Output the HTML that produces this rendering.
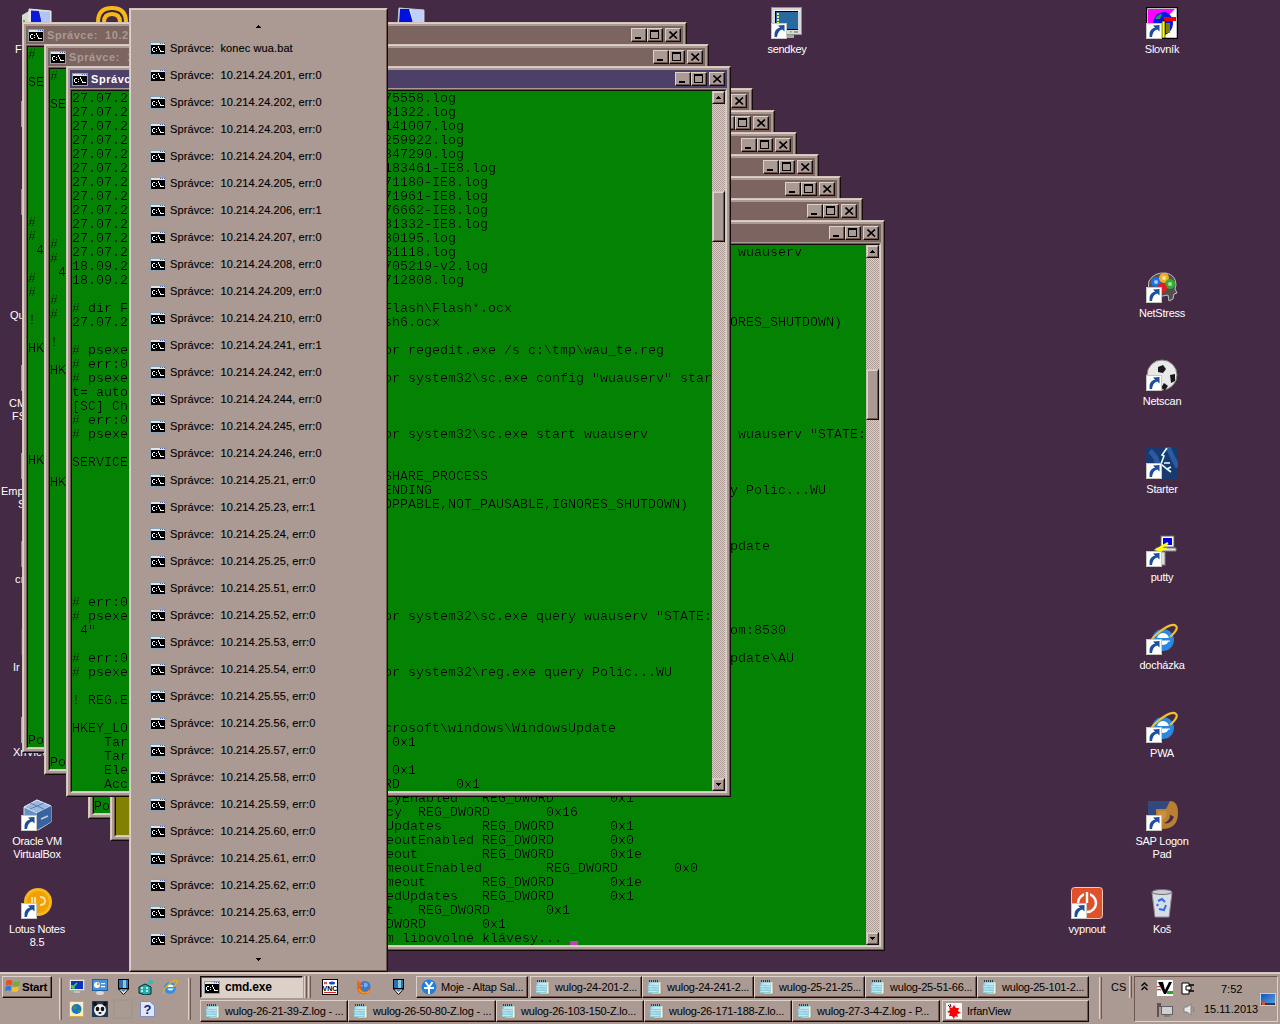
<!DOCTYPE html><html><head><meta charset="utf-8"><style>
*{margin:0;padding:0;box-sizing:border-box}
html,body{width:1280px;height:1024px;overflow:hidden;background:#452a45;font-family:"Liberation Sans",sans-serif;position:relative}
.a{position:absolute}
.win{position:absolute;width:665px;height:731px;background:#aa9a93;
 border-top:1px solid #d0c4bc;border-left:1px solid #d0c4bc;border-right:1px solid #140c0c;border-bottom:1px solid #140c0c}
.win .f2{position:absolute;left:0;top:0;right:0;bottom:0;border-top:1px solid #dcd2ca;border-left:1px solid #dcd2ca;border-right:1px solid #705850;border-bottom:1px solid #705850}
.tb{position:absolute;left:3px;top:3px;width:657px;height:18px;background:#7c6460}
.act .tb{background:#4c4068}
.tt{position:absolute;left:21px;top:3px;font-weight:bold;font-size:11px;letter-spacing:0.55px;line-height:12px;color:#aa9a93;white-space:pre}
.act .tt{color:#fff}
.ico{position:absolute;left:2px;top:3px;width:16px;height:13px}
.ico i{position:absolute;left:1px;top:1px;font:bold 7px/8px "Liberation Mono",monospace;color:#fff;font-style:normal;letter-spacing:-1px}
.btn{position:absolute;top:2px;width:16px;height:14px;background:#aa9a93;border-top:1px solid #dcd2ca;border-left:1px solid #dcd2ca;border-right:1px solid #140c0c;border-bottom:1px solid #140c0c}
.btn:after{content:"";position:absolute;left:0;top:0;right:0;bottom:0;border-right:1px solid #705850;border-bottom:1px solid #705850}
.cl{position:absolute;left:3px;top:22px;width:657px;height:704px;border-top:1px solid #705850;border-left:1px solid #705850;border-right:1px solid #dcd2ca;border-bottom:1px solid #dcd2ca}
.cl2{position:absolute;left:0;top:0;right:0;bottom:0;border-top:1px solid #140c0c;border-left:1px solid #140c0c;border-right:1px solid #d0c4bc;border-bottom:1px solid #d0c4bc;background:#048204;overflow:hidden}
.con{position:absolute;left:0;top:1px;width:640px;height:700px;filter:url(#thin);font:13.333px/14px "Liberation Mono",monospace;color:#000;white-space:pre}
.sb{position:absolute;left:640px;top:0;width:13px;height:700px;background-color:#dcd2ca;background-image:repeating-conic-gradient(#aa9a93 0% 25%, #dcd2ca 0% 50%);background-size:2px 2px}
.sbb{position:absolute;left:0;width:13px;height:13px;background:#aa9a93;border-top:1px solid #d0c4bc;border-left:1px solid #d0c4bc;border-right:1px solid #140c0c;border-bottom:1px solid #140c0c}
.sbb:after{content:"";position:absolute;left:0;top:0;right:0;bottom:0;border-top:1px solid #dcd2ca;border-left:1px solid #dcd2ca;border-right:1px solid #705850;border-bottom:1px solid #705850}
.lab{position:absolute;color:#fff;font-size:11px;line-height:13px;text-align:center;width:74px;letter-spacing:-0.25px}
.mi{position:absolute;left:21px;font-size:11px;letter-spacing:0.1px;line-height:13px;color:#000;white-space:pre;-webkit-text-stroke:0.12px #000}
.mic{position:absolute;left:20px;width:16px;height:13px}
.mic i{position:absolute;left:1px;top:1px;font:bold 7px/8px "Liberation Mono",monospace;color:#fff;font-style:normal;letter-spacing:-1px}
.tbtn{position:absolute;height:22px;background:#aa9a93;border-top:1px solid #dcd2ca;border-left:1px solid #dcd2ca;border-right:1px solid #140c0c;border-bottom:1px solid #140c0c;font-size:11px;line-height:19px;white-space:pre;overflow:hidden;color:#000;letter-spacing:-0.2px}
.tbtn:after{content:"";position:absolute;left:0;top:0;right:0;bottom:0;border-right:1px solid #705850;border-bottom:1px solid #705850}
.pr:after{display:none}
</style></head><body><svg width="0" height="0" style="position:absolute"><filter id="thin" color-interpolation-filters="sRGB"><feComponentTransfer><feFuncA type="linear" slope="1.45" intercept="-0.4"/></feComponentTransfer></filter></svg><svg class="a" style="left:1146px;top:7px" width="32" height="32" viewBox="0 0 32 32"><rect x="0.5" y="0.5" width="31" height="31" fill="#fff" stroke="#000" stroke-width="1.5"/><path d="M2 2 H29 L22 9 L12 12 L2 20Z" fill="#ff00ff"/><path d="M7 14 Q10 5 19 5 Q27 7 27 17 Q26 26 18 28 L12 28 Q7 24 7 14Z" fill="#0018f0"/><path d="M9 12 Q12 7 16 7 L14 12 Z" fill="#20a040"/><rect x="18" y="10" width="12" height="4" fill="#f00000"/><rect x="20" y="16" width="4" height="10" fill="#808000"/><rect x="16" y="14" width="3" height="17" fill="#ffff00" stroke="#000" stroke-width="0.6"/><g><rect x="0.5" y="16.5" width="15" height="15" fill="#fff" stroke="#c8c8c0"/><path d="M3.5 30 Q2.5 22 9 20.5 L7 18.5 L13.5 18 L13.5 24.5 L11.3 22.6 Q7 23.5 6 30 Z" fill="#1d4f9e"/></g></svg><div class="lab" style="left:1125px;top:43px">Slovník</div><svg class="a" style="left:1146px;top:271px" width="32" height="32" viewBox="0 0 32 32"><path d="M6 26 Q1 18 3 10 Q8 1 20 2 Q30 4 30 14 L29 18 L31 22 L28 23 L27 28 L23 30 L22 24 Q14 26 6 26Z" fill="#505050" stroke="#c0c0c0"/><circle cx="10" cy="11" r="5" fill="#2070e0"/><circle cx="18" cy="7" r="5" fill="#f0b020"/><circle cx="24" cy="13" r="5" fill="#30b030"/><circle cx="16" cy="17" r="5" fill="#e02020"/><circle cx="10" cy="11" r="2" fill="#a0c8ff"/><circle cx="18" cy="7" r="2" fill="#ffe0a0"/><circle cx="24" cy="13" r="2" fill="#a0e0a0"/><g><rect x="0.5" y="16.5" width="15" height="15" fill="#fff" stroke="#c8c8c0"/><path d="M3.5 30 Q2.5 22 9 20.5 L7 18.5 L13.5 18 L13.5 24.5 L11.3 22.6 Q7 23.5 6 30 Z" fill="#1d4f9e"/></g></svg><div class="lab" style="left:1125px;top:307px">NetStress</div><svg class="a" style="left:1146px;top:359px" width="32" height="32" viewBox="0 0 32 32"><circle cx="16" cy="16" r="15" fill="#e8e8e8" stroke="#808080"/><path d="M12 8 L17 6 L20 10 L17 14 L12 13Z M24 16 L29 15 L29 22 L25 24Z M5 19 L9 20 L9 26 L5 24Z M18 24 L22 27 L19 31 L15 29Z" fill="#181818"/><g><rect x="0.5" y="16.5" width="15" height="15" fill="#fff" stroke="#c8c8c0"/><path d="M3.5 30 Q2.5 22 9 20.5 L7 18.5 L13.5 18 L13.5 24.5 L11.3 22.6 Q7 23.5 6 30 Z" fill="#1d4f9e"/></g></svg><div class="lab" style="left:1125px;top:395px">Netscan</div><svg class="a" style="left:1146px;top:447px" width="32" height="32" viewBox="0 0 32 32"><rect x="0" y="0" width="32" height="32" fill="#183a70"/><path d="M4 4 Q16 14 10 30 M22 0 Q28 14 32 20" stroke="#2a5aa0" stroke-width="5" fill="none"/><path d="M21 1 L16 8 L18 9 L15 17 L21 22 L25 25 M18 16 L24 16 M21 22 L25 20" stroke="#e0ffff" stroke-width="1.6" fill="none"/><g><rect x="0.5" y="16.5" width="15" height="15" fill="#fff" stroke="#c8c8c0"/><path d="M3.5 30 Q2.5 22 9 20.5 L7 18.5 L13.5 18 L13.5 24.5 L11.3 22.6 Q7 23.5 6 30 Z" fill="#1d4f9e"/></g></svg><div class="lab" style="left:1125px;top:483px">Starter</div><svg class="a" style="left:1146px;top:535px" width="32" height="32" viewBox="0 0 32 32"><rect x="15" y="1" width="13" height="11" fill="#fff" stroke="#606060"/><rect x="17" y="3" width="9" height="7" fill="#0000e0"/><path d="M10 13 H30 V16 H10Z" fill="#e0e0e0" stroke="#808080"/><rect x="6" y="17" width="13" height="13" fill="#e0e0e0" stroke="#808080"/><path d="M22 8 L12 14 L17 14 L8 19" stroke="#ffff00" stroke-width="2.5" fill="none"/><g><rect x="0.5" y="16.5" width="15" height="15" fill="#fff" stroke="#c8c8c0"/><path d="M3.5 30 Q2.5 22 9 20.5 L7 18.5 L13.5 18 L13.5 24.5 L11.3 22.6 Q7 23.5 6 30 Z" fill="#1d4f9e"/></g></svg><div class="lab" style="left:1125px;top:571px">putty</div><svg class="a" style="left:1146px;top:623px" width="32" height="32" viewBox="0 0 32 32"><circle cx="17" cy="17" r="11" fill="#2a88e0"/><circle cx="17" cy="16" r="6" fill="#fff"/><rect x="10" y="15" width="15" height="3" fill="#2a88e0"/><path d="M11 18 H24" stroke="#fff" stroke-width="1"/><path d="M4 26 Q0 20 12 10 Q26 -1 30 3 Q33 6 24 14" stroke="#f0c030" stroke-width="2.2" fill="none"/><g><rect x="0.5" y="16.5" width="15" height="15" fill="#fff" stroke="#c8c8c0"/><path d="M3.5 30 Q2.5 22 9 20.5 L7 18.5 L13.5 18 L13.5 24.5 L11.3 22.6 Q7 23.5 6 30 Z" fill="#1d4f9e"/></g></svg><div class="lab" style="left:1125px;top:659px">docházka</div><svg class="a" style="left:1146px;top:711px" width="32" height="32" viewBox="0 0 32 32"><circle cx="17" cy="17" r="11" fill="#2a88e0"/><circle cx="17" cy="16" r="6" fill="#fff"/><rect x="10" y="15" width="15" height="3" fill="#2a88e0"/><path d="M11 18 H24" stroke="#fff" stroke-width="1"/><path d="M4 26 Q0 20 12 10 Q26 -1 30 3 Q33 6 24 14" stroke="#f0c030" stroke-width="2.2" fill="none"/><g><rect x="0.5" y="16.5" width="15" height="15" fill="#fff" stroke="#c8c8c0"/><path d="M3.5 30 Q2.5 22 9 20.5 L7 18.5 L13.5 18 L13.5 24.5 L11.3 22.6 Q7 23.5 6 30 Z" fill="#1d4f9e"/></g></svg><div class="lab" style="left:1125px;top:747px">PWA</div><svg class="a" style="left:1146px;top:799px" width="32" height="32" viewBox="0 0 32 32"><path d="M2 2 H24 Q32 2 32 14 Q32 30 16 30 H10 V10 H20 Q24 10 24 16 Q24 22 18 24 Q24 26 28 18" fill="#b88030"/><path d="M2 2 H24 L20 10 H10 L10 30 L2 28Z" fill="#304a80"/><path d="M12 12 H20 Q22 18 16 22 H12Z" fill="#c89040"/><g><rect x="0.5" y="16.5" width="15" height="15" fill="#fff" stroke="#c8c8c0"/><path d="M3.5 30 Q2.5 22 9 20.5 L7 18.5 L13.5 18 L13.5 24.5 L11.3 22.6 Q7 23.5 6 30 Z" fill="#1d4f9e"/></g></svg><div class="lab" style="left:1125px;top:835px">SAP Logon</div><div class="lab" style="left:1125px;top:848px">Pad</div><svg class="a" style="left:1146px;top:887px" width="32" height="32" viewBox="0 0 32 32"><path d="M6 5 H26 L23 30 H9Z" fill="#d8dce8" stroke="#909090"/><ellipse cx="16" cy="5" rx="10" ry="2.5" fill="#c8ccd8" stroke="#707070"/><path d="M12 14 L16 12 L19 15 M20 18 L18 23 L13 22 M11 19 L12 17" stroke="#3070e0" stroke-width="2" fill="none"/></svg><div class="lab" style="left:1125px;top:923px">Koš</div><svg class="a" style="left:1071px;top:887px" width="32" height="32" viewBox="0 0 32 32"><rect x="0.5" y="0.5" width="31" height="31" rx="3" fill="#e0502a" stroke="#f0c8b8"/><circle cx="16" cy="16" r="9" stroke="#fff" stroke-width="2.5" fill="none"/><rect x="13" y="4" width="6" height="10" fill="#e0502a"/><rect x="14.8" y="5" width="2.4" height="11" fill="#fff"/><g><rect x="0.5" y="16.5" width="15" height="15" fill="#fff" stroke="#c8c8c0"/><path d="M3.5 30 Q2.5 22 9 20.5 L7 18.5 L13.5 18 L13.5 24.5 L11.3 22.6 Q7 23.5 6 30 Z" fill="#1d4f9e"/></g></svg><div class="lab" style="left:1050px;top:923px">vypnout</div><svg class="a" style="left:771px;top:7px" width="32" height="32" viewBox="0 0 32 32"><rect x="0.5" y="0.5" width="30" height="27" fill="#d8d8d8" stroke="#909090"/><rect x="3" y="3" width="26" height="2" fill="#f0f0f0"/><rect x="4" y="4" width="23" height="19" fill="#000"/><rect x="5" y="5" width="22" height="17" fill="#286aa0"/><rect x="6" y="6" width="2" height="2" fill="#f0f060"/><rect x="6" y="9" width="2" height="2" fill="#f0f060"/><rect x="6" y="12" width="2" height="2" fill="#f0f060"/><rect x="6" y="15" width="2" height="2" fill="#f0f060"/><rect x="19" y="24" width="1.5" height="1.5" fill="#20e020"/><rect x="23" y="24.5" width="4" height="1" fill="#606060"/><rect x="16" y="28" width="7" height="3" fill="#a8a8a8"/><g><rect x="0.5" y="16.5" width="15" height="15" fill="#fff" stroke="#c8c8c0"/><path d="M3.5 30 Q2.5 22 9 20.5 L7 18.5 L13.5 18 L13.5 24.5 L11.3 22.6 Q7 23.5 6 30 Z" fill="#1d4f9e"/></g></svg><div class="lab" style="left:750px;top:43px">sendkey</div><svg class="a" style="left:21px;top:799px" width="32" height="32" viewBox="0 0 32 32"><path d="M16 1 L30 7 V23 L17 31 L3 24 V8Z" fill="#6a90c0" stroke="#d0e0f0"/><path d="M3 8 L16 14 L30 7 L16 1Z" fill="#9ab8e0" stroke="#e8f0f8" stroke-width="0.8"/><path d="M16 14 V31 L30 23 V7Z" fill="#3a64a0"/><path d="M9 4 L23 10 M23 4 L9 10" stroke="#5070a0" stroke-width="0.8"/><path d="M20 20 L27 17" stroke="#c0d0e0" stroke-width="1.5"/><g><rect x="0.5" y="16.5" width="15" height="15" fill="#fff" stroke="#c8c8c0"/><path d="M3.5 30 Q2.5 22 9 20.5 L7 18.5 L13.5 18 L13.5 24.5 L11.3 22.6 Q7 23.5 6 30 Z" fill="#1d4f9e"/></g></svg><div class="lab" style="left:0px;top:835px">Oracle VM</div><div class="lab" style="left:0px;top:848px">VirtualBox</div><svg class="a" style="left:21px;top:887px" width="32" height="32" viewBox="0 0 32 32"><circle cx="17" cy="15" r="14" fill="#f8b820"/><circle cx="17" cy="15" r="11" fill="#f0a000"/><path d="M11 10 V20 M14 10 V20 M19 10 Q24 10 24 14 Q24 18 19 18" stroke="#f8e0a0" stroke-width="2" fill="none"/><g><rect x="0.5" y="16.5" width="15" height="15" fill="#fff" stroke="#c8c8c0"/><path d="M3.5 30 Q2.5 22 9 20.5 L7 18.5 L13.5 18 L13.5 24.5 L11.3 22.6 Q7 23.5 6 30 Z" fill="#1d4f9e"/></g></svg><div class="lab" style="left:0px;top:923px">Lotus Notes</div><div class="lab" style="left:0px;top:936px">8.5</div><svg class="a" style="left:21px;top:8px" width="32" height="16" viewBox="0 0 32 16"><path d="M1 7 L8 3 V16 H1Z" fill="#d8d8d0"/><path d="M8 1 L30 3 V16 H8Z" fill="#e0e4f0" stroke="#e8e8e8"/><path d="M10 2.5 L18 3 L21 16 H10Z" fill="#0a1ad8"/><path d="M19 3.5 H29 V16 H21Z" fill="#b0c4f8"/><rect x="2" y="12" width="2" height="2" fill="#40c040"/></svg><svg class="a" style="left:96px;top:6px" width="32" height="16" viewBox="0 0 32 16"><path d="M2 16 Q2 2 16 2 Q30 2 30 16" stroke="#f8b818" stroke-width="4" fill="none"/><path d="M8 16 Q8 8 16 8 Q24 8 24 16" stroke="#f8b818" stroke-width="4" fill="none"/><path d="M5 16 Q5 5 16 5 Q27 5 27 16" stroke="#282848" stroke-width="1" fill="none"/></svg><svg class="a" style="left:397px;top:7px" width="32" height="16" viewBox="0 0 32 16"><path d="M2 1 L27 3 V16 H1Z" fill="#e0e8f8" stroke="#c0c8d0"/><path d="M3 2 L12 2 L16 16 H2Z" fill="#0010e0"/><path d="M14 3 H26 V16 H16Z" fill="#c0d0f8"/></svg><div class="a" style="left:0;top:0;width:22px;height:760px;overflow:hidden"><div class="a" style="left:15px;top:43px;color:#fff;font-size:11px;line-height:13px;white-space:pre">F</div><div class="a" style="left:10px;top:309px;color:#fff;font-size:11px;line-height:13px;white-space:pre">Qu</div><div class="a" style="left:9px;top:397px;color:#fff;font-size:11px;line-height:13px;white-space:pre">CM</div><div class="a" style="left:12px;top:410px;color:#fff;font-size:11px;line-height:13px;white-space:pre">FS</div><div class="a" style="left:1px;top:485px;color:#fff;font-size:11px;line-height:13px;white-space:pre">Emp</div><div class="a" style="left:18px;top:498px;color:#fff;font-size:11px;line-height:13px;white-space:pre">S</div><div class="a" style="left:15px;top:573px;color:#fff;font-size:11px;line-height:13px;white-space:pre">cı</div><div class="a" style="left:13px;top:661px;color:#fff;font-size:11px;line-height:13px;white-space:pre">Ir</div><div class="a" style="left:21px;top:101px;width:1px;height:26px;background:#8aa0c8"></div><div class="a" style="left:21px;top:189px;width:1px;height:26px;background:#7aa070"></div><div class="a" style="left:21px;top:365px;width:1px;height:26px;background:#9a9a98"></div><div class="a" style="left:21px;top:453px;width:1px;height:26px;background:#9a9a98"></div><div class="a" style="left:21px;top:541px;width:1px;height:26px;background:#8a8a90"></div><div class="a" style="left:21px;top:629px;width:1px;height:26px;background:#505058"></div><div class="a" style="left:21px;top:717px;width:1px;height:26px;background:#a8a8b0"></div></div><div class="a" style="left:13px;top:746px;color:#fff;font-size:11px;line-height:13px;white-space:pre">XnView</div><div class="win" style="left:22px;top:22px"><div class="f2"></div><div class="tb"><div class="ico"><svg width="16" height="13" shape-rendering="crispEdges" style="display:block"><rect x="0" y="0" width="16" height="13" fill="#88a0b0"/><rect x="1" y="1" width="14" height="2" fill="#dde4ea"/><rect x="10" y="1" width="1" height="1" fill="#4a68a8"/><rect x="12" y="1" width="1" height="1" fill="#4a68a8"/><rect x="14" y="1" width="1" height="1" fill="#4a68a8"/><rect x="1" y="3" width="14" height="9" fill="#000"/><g fill="#fff"><rect x="3" y="5" width="2" height="1"/><rect x="2" y="6" width="1" height="3"/><rect x="3" y="9" width="2" height="1"/><rect x="6" y="6" width="1" height="1"/><rect x="6" y="8" width="1" height="1"/><rect x="8" y="4" width="1" height="2"/><rect x="9" y="6" width="1" height="2"/><rect x="10" y="8" width="1" height="2"/><rect x="11" y="9" width="3" height="1"/></g></svg></div><div class="tt">Správce:  10.214.24.201, err:0</div><div class="btn" style="left:605px"><div class="a" style="left:3px;top:8px;width:6px;height:2px;background:#000"></div></div><div class="btn" style="left:621px"><div class="a" style="left:2px;top:1px;width:9px;height:9px;border:1px solid #000;border-top:2px solid #000"></div></div><div class="btn" style="left:639px"><svg class="a" style="left:3px;top:2px" width="9" height="8" viewBox="0 0 9 8"><path d="M0.5 0.5 L8 7.5 M8 0.5 L0.5 7.5" stroke="#000" stroke-width="1.6"/></svg></div></div><div class="cl"><div class="cl2" style="background:#048204"><div class="con"><div class="a" style="left:0px;top:0px">#</div><div class="a" style="left:0px;top:28px">SE</div><div class="a" style="left:0px;top:168px">#</div><div class="a" style="left:0px;top:182px">#</div><div class="a" style="left:8px;top:196px">4</div><div class="a" style="left:0px;top:224px">#</div><div class="a" style="left:0px;top:238px">#</div><div class="a" style="left:0px;top:266px">!</div><div class="a" style="left:0px;top:294px">HK</div><div class="a" style="left:0px;top:406px">HK</div><div class="a" style="left:0px;top:686px">Po</div></div><div class="sb"><div class="sbb" style="top:0"><svg class="a" style="left:3px;top:4px" width="5" height="3" shape-rendering="crispEdges"><rect x="2" y="0" width="1" height="1"/><rect x="1" y="1" width="3" height="1"/><rect x="0" y="2" width="5" height="1"/></svg></div><div class="sbb" style="top:687px"><svg class="a" style="left:3px;top:4px" width="5" height="3" shape-rendering="crispEdges"><rect x="0" y="0" width="5" height="1"/><rect x="1" y="1" width="3" height="1"/><rect x="2" y="2" width="1" height="1"/></svg></div></div></div></div></div><div class="win" style="left:44px;top:44px"><div class="f2"></div><div class="tb"><div class="ico"><svg width="16" height="13" shape-rendering="crispEdges" style="display:block"><rect x="0" y="0" width="16" height="13" fill="#88a0b0"/><rect x="1" y="1" width="14" height="2" fill="#dde4ea"/><rect x="10" y="1" width="1" height="1" fill="#4a68a8"/><rect x="12" y="1" width="1" height="1" fill="#4a68a8"/><rect x="14" y="1" width="1" height="1" fill="#4a68a8"/><rect x="1" y="3" width="14" height="9" fill="#000"/><g fill="#fff"><rect x="3" y="5" width="2" height="1"/><rect x="2" y="6" width="1" height="3"/><rect x="3" y="9" width="2" height="1"/><rect x="6" y="6" width="1" height="1"/><rect x="6" y="8" width="1" height="1"/><rect x="8" y="4" width="1" height="2"/><rect x="9" y="6" width="1" height="2"/><rect x="10" y="8" width="1" height="2"/><rect x="11" y="9" width="3" height="1"/></g></svg></div><div class="tt">Správce:  10.214.24.202, err:0</div><div class="btn" style="left:605px"><div class="a" style="left:3px;top:8px;width:6px;height:2px;background:#000"></div></div><div class="btn" style="left:621px"><div class="a" style="left:2px;top:1px;width:9px;height:9px;border:1px solid #000;border-top:2px solid #000"></div></div><div class="btn" style="left:639px"><svg class="a" style="left:3px;top:2px" width="9" height="8" viewBox="0 0 9 8"><path d="M0.5 0.5 L8 7.5 M8 0.5 L0.5 7.5" stroke="#000" stroke-width="1.6"/></svg></div></div><div class="cl"><div class="cl2" style="background:#048204"><div class="con"><div class="a" style="left:0px;top:0px">#</div><div class="a" style="left:0px;top:28px">SE</div><div class="a" style="left:0px;top:168px">#</div><div class="a" style="left:0px;top:182px">#</div><div class="a" style="left:8px;top:196px">4</div><div class="a" style="left:0px;top:224px">#</div><div class="a" style="left:0px;top:238px">#</div><div class="a" style="left:0px;top:266px">!</div><div class="a" style="left:0px;top:294px">HK</div><div class="a" style="left:0px;top:406px">HK</div><div class="a" style="left:0px;top:686px">Po</div></div><div class="sb"><div class="sbb" style="top:0"><svg class="a" style="left:3px;top:4px" width="5" height="3" shape-rendering="crispEdges"><rect x="2" y="0" width="1" height="1"/><rect x="1" y="1" width="3" height="1"/><rect x="0" y="2" width="5" height="1"/></svg></div><div class="sbb" style="top:687px"><svg class="a" style="left:3px;top:4px" width="5" height="3" shape-rendering="crispEdges"><rect x="0" y="0" width="5" height="1"/><rect x="1" y="1" width="3" height="1"/><rect x="2" y="2" width="1" height="1"/></svg></div></div></div></div></div><div class="win" style="left:88px;top:88px"><div class="f2"></div><div class="tb"><div class="ico"><svg width="16" height="13" shape-rendering="crispEdges" style="display:block"><rect x="0" y="0" width="16" height="13" fill="#88a0b0"/><rect x="1" y="1" width="14" height="2" fill="#dde4ea"/><rect x="10" y="1" width="1" height="1" fill="#4a68a8"/><rect x="12" y="1" width="1" height="1" fill="#4a68a8"/><rect x="14" y="1" width="1" height="1" fill="#4a68a8"/><rect x="1" y="3" width="14" height="9" fill="#000"/><g fill="#fff"><rect x="3" y="5" width="2" height="1"/><rect x="2" y="6" width="1" height="3"/><rect x="3" y="9" width="2" height="1"/><rect x="6" y="6" width="1" height="1"/><rect x="6" y="8" width="1" height="1"/><rect x="8" y="4" width="1" height="2"/><rect x="9" y="6" width="1" height="2"/><rect x="10" y="8" width="1" height="2"/><rect x="11" y="9" width="3" height="1"/></g></svg></div><div class="tt">Správce:  x</div><div class="btn" style="left:605px"><div class="a" style="left:3px;top:8px;width:6px;height:2px;background:#000"></div></div><div class="btn" style="left:621px"><div class="a" style="left:2px;top:1px;width:9px;height:9px;border:1px solid #000;border-top:2px solid #000"></div></div><div class="btn" style="left:639px"><svg class="a" style="left:3px;top:2px" width="9" height="8" viewBox="0 0 9 8"><path d="M0.5 0.5 L8 7.5 M8 0.5 L0.5 7.5" stroke="#000" stroke-width="1.6"/></svg></div></div><div class="cl"><div class="cl2" style="background:#048204"><div class="con"><div class="a" style="left:0px;top:686px">Po</div></div><div class="sb"><div class="sbb" style="top:0"><svg class="a" style="left:3px;top:4px" width="5" height="3" shape-rendering="crispEdges"><rect x="2" y="0" width="1" height="1"/><rect x="1" y="1" width="3" height="1"/><rect x="0" y="2" width="5" height="1"/></svg></div><div class="sbb" style="top:687px"><svg class="a" style="left:3px;top:4px" width="5" height="3" shape-rendering="crispEdges"><rect x="0" y="0" width="5" height="1"/><rect x="1" y="1" width="3" height="1"/><rect x="2" y="2" width="1" height="1"/></svg></div></div></div></div></div><div class="win" style="left:110px;top:110px"><div class="f2"></div><div class="tb"><div class="ico"><svg width="16" height="13" shape-rendering="crispEdges" style="display:block"><rect x="0" y="0" width="16" height="13" fill="#88a0b0"/><rect x="1" y="1" width="14" height="2" fill="#dde4ea"/><rect x="10" y="1" width="1" height="1" fill="#4a68a8"/><rect x="12" y="1" width="1" height="1" fill="#4a68a8"/><rect x="14" y="1" width="1" height="1" fill="#4a68a8"/><rect x="1" y="3" width="14" height="9" fill="#000"/><g fill="#fff"><rect x="3" y="5" width="2" height="1"/><rect x="2" y="6" width="1" height="3"/><rect x="3" y="9" width="2" height="1"/><rect x="6" y="6" width="1" height="1"/><rect x="6" y="8" width="1" height="1"/><rect x="8" y="4" width="1" height="2"/><rect x="9" y="6" width="1" height="2"/><rect x="10" y="8" width="1" height="2"/><rect x="11" y="9" width="3" height="1"/></g></svg></div><div class="tt">Správce:  x</div><div class="btn" style="left:605px"><div class="a" style="left:3px;top:8px;width:6px;height:2px;background:#000"></div></div><div class="btn" style="left:621px"><div class="a" style="left:2px;top:1px;width:9px;height:9px;border:1px solid #000;border-top:2px solid #000"></div></div><div class="btn" style="left:639px"><svg class="a" style="left:3px;top:2px" width="9" height="8" viewBox="0 0 9 8"><path d="M0.5 0.5 L8 7.5 M8 0.5 L0.5 7.5" stroke="#000" stroke-width="1.6"/></svg></div></div><div class="cl"><div class="cl2" style="background:#848004"><div class="con"></div><div class="sb"><div class="sbb" style="top:0"><svg class="a" style="left:3px;top:4px" width="5" height="3" shape-rendering="crispEdges"><rect x="2" y="0" width="1" height="1"/><rect x="1" y="1" width="3" height="1"/><rect x="0" y="2" width="5" height="1"/></svg></div><div class="sbb" style="top:687px"><svg class="a" style="left:3px;top:4px" width="5" height="3" shape-rendering="crispEdges"><rect x="0" y="0" width="5" height="1"/><rect x="1" y="1" width="3" height="1"/><rect x="2" y="2" width="1" height="1"/></svg></div></div></div></div></div><div class="win" style="left:132px;top:132px"><div class="f2"></div><div class="tb"><div class="ico"><svg width="16" height="13" shape-rendering="crispEdges" style="display:block"><rect x="0" y="0" width="16" height="13" fill="#88a0b0"/><rect x="1" y="1" width="14" height="2" fill="#dde4ea"/><rect x="10" y="1" width="1" height="1" fill="#4a68a8"/><rect x="12" y="1" width="1" height="1" fill="#4a68a8"/><rect x="14" y="1" width="1" height="1" fill="#4a68a8"/><rect x="1" y="3" width="14" height="9" fill="#000"/><g fill="#fff"><rect x="3" y="5" width="2" height="1"/><rect x="2" y="6" width="1" height="3"/><rect x="3" y="9" width="2" height="1"/><rect x="6" y="6" width="1" height="1"/><rect x="6" y="8" width="1" height="1"/><rect x="8" y="4" width="1" height="2"/><rect x="9" y="6" width="1" height="2"/><rect x="10" y="8" width="1" height="2"/><rect x="11" y="9" width="3" height="1"/></g></svg></div><div class="tt">Správce:  x</div><div class="btn" style="left:605px"><div class="a" style="left:3px;top:8px;width:6px;height:2px;background:#000"></div></div><div class="btn" style="left:621px"><div class="a" style="left:2px;top:1px;width:9px;height:9px;border:1px solid #000;border-top:2px solid #000"></div></div><div class="btn" style="left:639px"><svg class="a" style="left:3px;top:2px" width="9" height="8" viewBox="0 0 9 8"><path d="M0.5 0.5 L8 7.5 M8 0.5 L0.5 7.5" stroke="#000" stroke-width="1.6"/></svg></div></div><div class="cl"><div class="cl2" style="background:#048204"><div class="con"></div><div class="sb"><div class="sbb" style="top:0"><svg class="a" style="left:3px;top:4px" width="5" height="3" shape-rendering="crispEdges"><rect x="2" y="0" width="1" height="1"/><rect x="1" y="1" width="3" height="1"/><rect x="0" y="2" width="5" height="1"/></svg></div><div class="sbb" style="top:687px"><svg class="a" style="left:3px;top:4px" width="5" height="3" shape-rendering="crispEdges"><rect x="0" y="0" width="5" height="1"/><rect x="1" y="1" width="3" height="1"/><rect x="2" y="2" width="1" height="1"/></svg></div></div></div></div></div><div class="win" style="left:154px;top:154px"><div class="f2"></div><div class="tb"><div class="ico"><svg width="16" height="13" shape-rendering="crispEdges" style="display:block"><rect x="0" y="0" width="16" height="13" fill="#88a0b0"/><rect x="1" y="1" width="14" height="2" fill="#dde4ea"/><rect x="10" y="1" width="1" height="1" fill="#4a68a8"/><rect x="12" y="1" width="1" height="1" fill="#4a68a8"/><rect x="14" y="1" width="1" height="1" fill="#4a68a8"/><rect x="1" y="3" width="14" height="9" fill="#000"/><g fill="#fff"><rect x="3" y="5" width="2" height="1"/><rect x="2" y="6" width="1" height="3"/><rect x="3" y="9" width="2" height="1"/><rect x="6" y="6" width="1" height="1"/><rect x="6" y="8" width="1" height="1"/><rect x="8" y="4" width="1" height="2"/><rect x="9" y="6" width="1" height="2"/><rect x="10" y="8" width="1" height="2"/><rect x="11" y="9" width="3" height="1"/></g></svg></div><div class="tt">Správce:  x</div><div class="btn" style="left:605px"><div class="a" style="left:3px;top:8px;width:6px;height:2px;background:#000"></div></div><div class="btn" style="left:621px"><div class="a" style="left:2px;top:1px;width:9px;height:9px;border:1px solid #000;border-top:2px solid #000"></div></div><div class="btn" style="left:639px"><svg class="a" style="left:3px;top:2px" width="9" height="8" viewBox="0 0 9 8"><path d="M0.5 0.5 L8 7.5 M8 0.5 L0.5 7.5" stroke="#000" stroke-width="1.6"/></svg></div></div><div class="cl"><div class="cl2" style="background:#048204"><div class="con"></div><div class="sb"><div class="sbb" style="top:0"><svg class="a" style="left:3px;top:4px" width="5" height="3" shape-rendering="crispEdges"><rect x="2" y="0" width="1" height="1"/><rect x="1" y="1" width="3" height="1"/><rect x="0" y="2" width="5" height="1"/></svg></div><div class="sbb" style="top:687px"><svg class="a" style="left:3px;top:4px" width="5" height="3" shape-rendering="crispEdges"><rect x="0" y="0" width="5" height="1"/><rect x="1" y="1" width="3" height="1"/><rect x="2" y="2" width="1" height="1"/></svg></div></div></div></div></div><div class="win" style="left:176px;top:176px"><div class="f2"></div><div class="tb"><div class="ico"><svg width="16" height="13" shape-rendering="crispEdges" style="display:block"><rect x="0" y="0" width="16" height="13" fill="#88a0b0"/><rect x="1" y="1" width="14" height="2" fill="#dde4ea"/><rect x="10" y="1" width="1" height="1" fill="#4a68a8"/><rect x="12" y="1" width="1" height="1" fill="#4a68a8"/><rect x="14" y="1" width="1" height="1" fill="#4a68a8"/><rect x="1" y="3" width="14" height="9" fill="#000"/><g fill="#fff"><rect x="3" y="5" width="2" height="1"/><rect x="2" y="6" width="1" height="3"/><rect x="3" y="9" width="2" height="1"/><rect x="6" y="6" width="1" height="1"/><rect x="6" y="8" width="1" height="1"/><rect x="8" y="4" width="1" height="2"/><rect x="9" y="6" width="1" height="2"/><rect x="10" y="8" width="1" height="2"/><rect x="11" y="9" width="3" height="1"/></g></svg></div><div class="tt">Správce:  x</div><div class="btn" style="left:605px"><div class="a" style="left:3px;top:8px;width:6px;height:2px;background:#000"></div></div><div class="btn" style="left:621px"><div class="a" style="left:2px;top:1px;width:9px;height:9px;border:1px solid #000;border-top:2px solid #000"></div></div><div class="btn" style="left:639px"><svg class="a" style="left:3px;top:2px" width="9" height="8" viewBox="0 0 9 8"><path d="M0.5 0.5 L8 7.5 M8 0.5 L0.5 7.5" stroke="#000" stroke-width="1.6"/></svg></div></div><div class="cl"><div class="cl2" style="background:#048204"><div class="con"></div><div class="sb"><div class="sbb" style="top:0"><svg class="a" style="left:3px;top:4px" width="5" height="3" shape-rendering="crispEdges"><rect x="2" y="0" width="1" height="1"/><rect x="1" y="1" width="3" height="1"/><rect x="0" y="2" width="5" height="1"/></svg></div><div class="sbb" style="top:687px"><svg class="a" style="left:3px;top:4px" width="5" height="3" shape-rendering="crispEdges"><rect x="0" y="0" width="5" height="1"/><rect x="1" y="1" width="3" height="1"/><rect x="2" y="2" width="1" height="1"/></svg></div></div></div></div></div><div class="win" style="left:198px;top:198px"><div class="f2"></div><div class="tb"><div class="ico"><svg width="16" height="13" shape-rendering="crispEdges" style="display:block"><rect x="0" y="0" width="16" height="13" fill="#88a0b0"/><rect x="1" y="1" width="14" height="2" fill="#dde4ea"/><rect x="10" y="1" width="1" height="1" fill="#4a68a8"/><rect x="12" y="1" width="1" height="1" fill="#4a68a8"/><rect x="14" y="1" width="1" height="1" fill="#4a68a8"/><rect x="1" y="3" width="14" height="9" fill="#000"/><g fill="#fff"><rect x="3" y="5" width="2" height="1"/><rect x="2" y="6" width="1" height="3"/><rect x="3" y="9" width="2" height="1"/><rect x="6" y="6" width="1" height="1"/><rect x="6" y="8" width="1" height="1"/><rect x="8" y="4" width="1" height="2"/><rect x="9" y="6" width="1" height="2"/><rect x="10" y="8" width="1" height="2"/><rect x="11" y="9" width="3" height="1"/></g></svg></div><div class="tt">Správce:  x</div><div class="btn" style="left:605px"><div class="a" style="left:3px;top:8px;width:6px;height:2px;background:#000"></div></div><div class="btn" style="left:621px"><div class="a" style="left:2px;top:1px;width:9px;height:9px;border:1px solid #000;border-top:2px solid #000"></div></div><div class="btn" style="left:639px"><svg class="a" style="left:3px;top:2px" width="9" height="8" viewBox="0 0 9 8"><path d="M0.5 0.5 L8 7.5 M8 0.5 L0.5 7.5" stroke="#000" stroke-width="1.6"/></svg></div></div><div class="cl"><div class="cl2" style="background:#048204"><div class="con"></div><div class="sb"><div class="sbb" style="top:0"><svg class="a" style="left:3px;top:4px" width="5" height="3" shape-rendering="crispEdges"><rect x="2" y="0" width="1" height="1"/><rect x="1" y="1" width="3" height="1"/><rect x="0" y="2" width="5" height="1"/></svg></div><div class="sbb" style="top:687px"><svg class="a" style="left:3px;top:4px" width="5" height="3" shape-rendering="crispEdges"><rect x="0" y="0" width="5" height="1"/><rect x="1" y="1" width="3" height="1"/><rect x="2" y="2" width="1" height="1"/></svg></div></div></div></div></div><div class="win" style="left:220px;top:220px"><div class="f2"></div><div class="tb"><div class="ico"><svg width="16" height="13" shape-rendering="crispEdges" style="display:block"><rect x="0" y="0" width="16" height="13" fill="#88a0b0"/><rect x="1" y="1" width="14" height="2" fill="#dde4ea"/><rect x="10" y="1" width="1" height="1" fill="#4a68a8"/><rect x="12" y="1" width="1" height="1" fill="#4a68a8"/><rect x="14" y="1" width="1" height="1" fill="#4a68a8"/><rect x="1" y="3" width="14" height="9" fill="#000"/><g fill="#fff"><rect x="3" y="5" width="2" height="1"/><rect x="2" y="6" width="1" height="3"/><rect x="3" y="9" width="2" height="1"/><rect x="6" y="6" width="1" height="1"/><rect x="6" y="8" width="1" height="1"/><rect x="8" y="4" width="1" height="2"/><rect x="9" y="6" width="1" height="2"/><rect x="10" y="8" width="1" height="2"/><rect x="11" y="9" width="3" height="1"/></g></svg></div><div class="tt">Správce:  x</div><div class="btn" style="left:605px"><div class="a" style="left:3px;top:8px;width:6px;height:2px;background:#000"></div></div><div class="btn" style="left:621px"><div class="a" style="left:2px;top:1px;width:9px;height:9px;border:1px solid #000;border-top:2px solid #000"></div></div><div class="btn" style="left:639px"><svg class="a" style="left:3px;top:2px" width="9" height="8" viewBox="0 0 9 8"><path d="M0.5 0.5 L8 7.5 M8 0.5 L0.5 7.5" stroke="#000" stroke-width="1.6"/></svg></div></div><div class="cl"><div class="cl2" style="background:#048204"><div class="con"><div class="a" style="left:512px;top:0px">wuauserv</div><div class="a" style="left:504px;top:70px">ORES_SHUTDOWN)</div><div class="a" style="left:512px;top:182px">wuauserv &quot;STATE:</div><div class="a" style="left:504px;top:238px">y Polic...WU</div><div class="a" style="left:504px;top:294px">pdate</div><div class="a" style="left:504px;top:378px">om:8530</div><div class="a" style="left:504px;top:406px">pdate\AU</div><div class="a" style="left:160px;top:546px">cyEnabled   REG_DWORD       0x1</div><div class="a" style="left:160px;top:560px">cy  REG_DWORD       0x16</div><div class="a" style="left:160px;top:574px">Updates     REG_DWORD       0x1</div><div class="a" style="left:160px;top:588px">eoutEnabled REG_DWORD       0x0</div><div class="a" style="left:160px;top:602px">eout        REG_DWORD       0x1e</div><div class="a" style="left:160px;top:616px">meoutEnabled        REG_DWORD       0x0</div><div class="a" style="left:160px;top:630px">meout       REG_DWORD       0x1e</div><div class="a" style="left:160px;top:644px">edUpdates   REG_DWORD       0x1</div><div class="a" style="left:160px;top:658px">t   REG_DWORD       0x1</div><div class="a" style="left:160px;top:672px">DWORD       0x1</div><div class="a" style="left:160px;top:686px">m libovolné klávesy...</div></div><div class="a" style="left:344px;top:696px;width:8px;height:4px;background:#c040c0"></div><div class="sb"><div class="sbb" style="top:0"><svg class="a" style="left:3px;top:4px" width="5" height="3" shape-rendering="crispEdges"><rect x="2" y="0" width="1" height="1"/><rect x="1" y="1" width="3" height="1"/><rect x="0" y="2" width="5" height="1"/></svg></div><div class="sbb" style="top:124px;height:51px"></div><div class="sbb" style="top:687px"><svg class="a" style="left:3px;top:4px" width="5" height="3" shape-rendering="crispEdges"><rect x="0" y="0" width="5" height="1"/><rect x="1" y="1" width="3" height="1"/><rect x="2" y="2" width="1" height="1"/></svg></div></div></div></div></div><div class="win act" style="left:66px;top:66px"><div class="f2"></div><div class="tb"><div class="ico"><svg width="16" height="13" shape-rendering="crispEdges" style="display:block"><rect x="0" y="0" width="16" height="13" fill="#88a0b0"/><rect x="1" y="1" width="14" height="2" fill="#dde4ea"/><rect x="10" y="1" width="1" height="1" fill="#4a68a8"/><rect x="12" y="1" width="1" height="1" fill="#4a68a8"/><rect x="14" y="1" width="1" height="1" fill="#4a68a8"/><rect x="1" y="3" width="14" height="9" fill="#000"/><g fill="#fff"><rect x="3" y="5" width="2" height="1"/><rect x="2" y="6" width="1" height="3"/><rect x="3" y="9" width="2" height="1"/><rect x="6" y="6" width="1" height="1"/><rect x="6" y="8" width="1" height="1"/><rect x="8" y="4" width="1" height="2"/><rect x="9" y="6" width="1" height="2"/><rect x="10" y="8" width="1" height="2"/><rect x="11" y="9" width="3" height="1"/></g></svg></div><div class="tt">Správce:  konec wua.bat</div><div class="btn" style="left:605px"><div class="a" style="left:3px;top:8px;width:6px;height:2px;background:#000"></div></div><div class="btn" style="left:621px"><div class="a" style="left:2px;top:1px;width:9px;height:9px;border:1px solid #000;border-top:2px solid #000"></div></div><div class="btn" style="left:639px"><svg class="a" style="left:3px;top:2px" width="9" height="8" viewBox="0 0 9 8"><path d="M0.5 0.5 L8 7.5 M8 0.5 L0.5 7.5" stroke="#000" stroke-width="1.6"/></svg></div></div><div class="cl"><div class="cl2" style="background:#048204"><div class="con"><div class="a" style="left:0px;top:0px">27.07.2</div><div class="a" style="left:0px;top:14px">27.07.2</div><div class="a" style="left:0px;top:28px">27.07.2</div><div class="a" style="left:0px;top:42px">27.07.2</div><div class="a" style="left:0px;top:56px">27.07.2</div><div class="a" style="left:0px;top:70px">27.07.2</div><div class="a" style="left:0px;top:84px">27.07.2</div><div class="a" style="left:0px;top:98px">27.07.2</div><div class="a" style="left:0px;top:112px">27.07.2</div><div class="a" style="left:0px;top:126px">27.07.2</div><div class="a" style="left:0px;top:140px">27.07.2</div><div class="a" style="left:0px;top:154px">27.07.2</div><div class="a" style="left:0px;top:168px">18.09.2</div><div class="a" style="left:0px;top:182px">18.09.2</div><div class="a" style="left:0px;top:210px"># dir F</div><div class="a" style="left:0px;top:224px">27.07.2</div><div class="a" style="left:0px;top:252px"># psexe</div><div class="a" style="left:0px;top:266px"># err:0</div><div class="a" style="left:0px;top:280px"># psexe</div><div class="a" style="left:0px;top:294px">t= auto</div><div class="a" style="left:0px;top:308px">[SC] Ch</div><div class="a" style="left:0px;top:322px"># err:0</div><div class="a" style="left:0px;top:336px"># psexe</div><div class="a" style="left:0px;top:364px">SERVICE_</div><div class="a" style="left:0px;top:504px"># err:0</div><div class="a" style="left:0px;top:518px"># psexe</div><div class="a" style="left:0px;top:532px"> 4&quot;</div><div class="a" style="left:0px;top:560px"># err:0</div><div class="a" style="left:0px;top:574px"># psexe</div><div class="a" style="left:0px;top:602px">! REG.EX</div><div class="a" style="left:0px;top:630px">HKEY_LOC</div><div class="a" style="left:0px;top:644px">    Tar</div><div class="a" style="left:0px;top:658px">    Tar</div><div class="a" style="left:0px;top:672px">    Ele</div><div class="a" style="left:0px;top:686px">    Acc</div><div class="a" style="left:312px;top:0px">75558.log</div><div class="a" style="left:312px;top:14px">31322.log</div><div class="a" style="left:312px;top:28px">141007.log</div><div class="a" style="left:312px;top:42px">259922.log</div><div class="a" style="left:312px;top:56px">847290.log</div><div class="a" style="left:312px;top:70px">183461-IE8.log</div><div class="a" style="left:312px;top:84px">71180-IE8.log</div><div class="a" style="left:312px;top:98px">71961-IE8.log</div><div class="a" style="left:312px;top:112px">76662-IE8.log</div><div class="a" style="left:312px;top:126px">81332-IE8.log</div><div class="a" style="left:312px;top:140px">80195.log</div><div class="a" style="left:312px;top:154px">61118.log</div><div class="a" style="left:312px;top:168px">705219-v2.log</div><div class="a" style="left:312px;top:182px">712808.log</div><div class="a" style="left:312px;top:210px">Flash\Flash*.ocx</div><div class="a" style="left:312px;top:224px">sh6.ocx</div><div class="a" style="left:312px;top:252px">or regedit.exe /s c:\tmp\wau_te.reg</div><div class="a" style="left:312px;top:280px">or system32\sc.exe config &quot;wuauserv&quot; star</div><div class="a" style="left:312px;top:336px">or system32\sc.exe start wuauserv</div><div class="a" style="left:312px;top:378px">SHARE_PROCESS</div><div class="a" style="left:312px;top:392px">ENDING</div><div class="a" style="left:312px;top:406px">OPPABLE,NOT_PAUSABLE,IGNORES_SHUTDOWN)</div><div class="a" style="left:312px;top:518px">or system32\sc.exe query wuauserv &quot;STATE:</div><div class="a" style="left:312px;top:574px">or system32\reg.exe query Polic...WU</div><div class="a" style="left:312px;top:630px">crosoft\windows\WindowsUpdate</div><div class="a" style="left:320px;top:644px">0x1</div><div class="a" style="left:320px;top:672px">0x1</div><div class="a" style="left:312px;top:686px">RD       0x1</div></div><div class="sb"><div class="sbb" style="top:0"><svg class="a" style="left:3px;top:4px" width="5" height="3" shape-rendering="crispEdges"><rect x="2" y="0" width="1" height="1"/><rect x="1" y="1" width="3" height="1"/><rect x="0" y="2" width="5" height="1"/></svg></div><div class="sbb" style="top:100px;height:51px"></div><div class="sbb" style="top:687px"><svg class="a" style="left:3px;top:4px" width="5" height="3" shape-rendering="crispEdges"><rect x="0" y="0" width="5" height="1"/><rect x="1" y="1" width="3" height="1"/><rect x="2" y="2" width="1" height="1"/></svg></div></div></div></div></div><div class="a" style="left:129px;top:8px;width:259px;height:964px;background:#aa9a93;border-top:1px solid #d0c4bc;border-left:1px solid #d0c4bc;border-right:1px solid #140c0c;border-bottom:1px solid #140c0c"><div class="a" style="left:0;top:0;right:0;bottom:0;border-top:1px solid #dcd2ca;border-left:1px solid #dcd2ca;border-right:1px solid #705850;border-bottom:1px solid #705850"></div><svg class="a" style="left:126px;top:16px" width="5" height="3" shape-rendering="crispEdges"><rect x="2" y="0" width="1" height="1"/><rect x="1" y="1" width="3" height="1"/><rect x="0" y="2" width="5" height="1"/></svg><div class="mic" style="top:33px"><svg width="16" height="13" shape-rendering="crispEdges" style="display:block"><rect x="0" y="0" width="16" height="13" fill="#88a0b0"/><rect x="1" y="1" width="14" height="2" fill="#dde4ea"/><rect x="10" y="1" width="1" height="1" fill="#4a68a8"/><rect x="12" y="1" width="1" height="1" fill="#4a68a8"/><rect x="14" y="1" width="1" height="1" fill="#4a68a8"/><rect x="1" y="3" width="14" height="9" fill="#000"/><g fill="#fff"><rect x="3" y="5" width="2" height="1"/><rect x="2" y="6" width="1" height="3"/><rect x="3" y="9" width="2" height="1"/><rect x="6" y="6" width="1" height="1"/><rect x="6" y="8" width="1" height="1"/><rect x="8" y="4" width="1" height="2"/><rect x="9" y="6" width="1" height="2"/><rect x="10" y="8" width="1" height="2"/><rect x="11" y="9" width="3" height="1"/></g></svg></div><div class="mi" style="left:40px;top:33px">Správce:  konec wua.bat</div><div class="mic" style="top:60px"><svg width="16" height="13" shape-rendering="crispEdges" style="display:block"><rect x="0" y="0" width="16" height="13" fill="#88a0b0"/><rect x="1" y="1" width="14" height="2" fill="#dde4ea"/><rect x="10" y="1" width="1" height="1" fill="#4a68a8"/><rect x="12" y="1" width="1" height="1" fill="#4a68a8"/><rect x="14" y="1" width="1" height="1" fill="#4a68a8"/><rect x="1" y="3" width="14" height="9" fill="#000"/><g fill="#fff"><rect x="3" y="5" width="2" height="1"/><rect x="2" y="6" width="1" height="3"/><rect x="3" y="9" width="2" height="1"/><rect x="6" y="6" width="1" height="1"/><rect x="6" y="8" width="1" height="1"/><rect x="8" y="4" width="1" height="2"/><rect x="9" y="6" width="1" height="2"/><rect x="10" y="8" width="1" height="2"/><rect x="11" y="9" width="3" height="1"/></g></svg></div><div class="mi" style="left:40px;top:60px">Správce:  10.214.24.201, err:0</div><div class="mic" style="top:87px"><svg width="16" height="13" shape-rendering="crispEdges" style="display:block"><rect x="0" y="0" width="16" height="13" fill="#88a0b0"/><rect x="1" y="1" width="14" height="2" fill="#dde4ea"/><rect x="10" y="1" width="1" height="1" fill="#4a68a8"/><rect x="12" y="1" width="1" height="1" fill="#4a68a8"/><rect x="14" y="1" width="1" height="1" fill="#4a68a8"/><rect x="1" y="3" width="14" height="9" fill="#000"/><g fill="#fff"><rect x="3" y="5" width="2" height="1"/><rect x="2" y="6" width="1" height="3"/><rect x="3" y="9" width="2" height="1"/><rect x="6" y="6" width="1" height="1"/><rect x="6" y="8" width="1" height="1"/><rect x="8" y="4" width="1" height="2"/><rect x="9" y="6" width="1" height="2"/><rect x="10" y="8" width="1" height="2"/><rect x="11" y="9" width="3" height="1"/></g></svg></div><div class="mi" style="left:40px;top:87px">Správce:  10.214.24.202, err:0</div><div class="mic" style="top:114px"><svg width="16" height="13" shape-rendering="crispEdges" style="display:block"><rect x="0" y="0" width="16" height="13" fill="#88a0b0"/><rect x="1" y="1" width="14" height="2" fill="#dde4ea"/><rect x="10" y="1" width="1" height="1" fill="#4a68a8"/><rect x="12" y="1" width="1" height="1" fill="#4a68a8"/><rect x="14" y="1" width="1" height="1" fill="#4a68a8"/><rect x="1" y="3" width="14" height="9" fill="#000"/><g fill="#fff"><rect x="3" y="5" width="2" height="1"/><rect x="2" y="6" width="1" height="3"/><rect x="3" y="9" width="2" height="1"/><rect x="6" y="6" width="1" height="1"/><rect x="6" y="8" width="1" height="1"/><rect x="8" y="4" width="1" height="2"/><rect x="9" y="6" width="1" height="2"/><rect x="10" y="8" width="1" height="2"/><rect x="11" y="9" width="3" height="1"/></g></svg></div><div class="mi" style="left:40px;top:114px">Správce:  10.214.24.203, err:0</div><div class="mic" style="top:141px"><svg width="16" height="13" shape-rendering="crispEdges" style="display:block"><rect x="0" y="0" width="16" height="13" fill="#88a0b0"/><rect x="1" y="1" width="14" height="2" fill="#dde4ea"/><rect x="10" y="1" width="1" height="1" fill="#4a68a8"/><rect x="12" y="1" width="1" height="1" fill="#4a68a8"/><rect x="14" y="1" width="1" height="1" fill="#4a68a8"/><rect x="1" y="3" width="14" height="9" fill="#000"/><g fill="#fff"><rect x="3" y="5" width="2" height="1"/><rect x="2" y="6" width="1" height="3"/><rect x="3" y="9" width="2" height="1"/><rect x="6" y="6" width="1" height="1"/><rect x="6" y="8" width="1" height="1"/><rect x="8" y="4" width="1" height="2"/><rect x="9" y="6" width="1" height="2"/><rect x="10" y="8" width="1" height="2"/><rect x="11" y="9" width="3" height="1"/></g></svg></div><div class="mi" style="left:40px;top:141px">Správce:  10.214.24.204, err:0</div><div class="mic" style="top:168px"><svg width="16" height="13" shape-rendering="crispEdges" style="display:block"><rect x="0" y="0" width="16" height="13" fill="#88a0b0"/><rect x="1" y="1" width="14" height="2" fill="#dde4ea"/><rect x="10" y="1" width="1" height="1" fill="#4a68a8"/><rect x="12" y="1" width="1" height="1" fill="#4a68a8"/><rect x="14" y="1" width="1" height="1" fill="#4a68a8"/><rect x="1" y="3" width="14" height="9" fill="#000"/><g fill="#fff"><rect x="3" y="5" width="2" height="1"/><rect x="2" y="6" width="1" height="3"/><rect x="3" y="9" width="2" height="1"/><rect x="6" y="6" width="1" height="1"/><rect x="6" y="8" width="1" height="1"/><rect x="8" y="4" width="1" height="2"/><rect x="9" y="6" width="1" height="2"/><rect x="10" y="8" width="1" height="2"/><rect x="11" y="9" width="3" height="1"/></g></svg></div><div class="mi" style="left:40px;top:168px">Správce:  10.214.24.205, err:0</div><div class="mic" style="top:195px"><svg width="16" height="13" shape-rendering="crispEdges" style="display:block"><rect x="0" y="0" width="16" height="13" fill="#88a0b0"/><rect x="1" y="1" width="14" height="2" fill="#dde4ea"/><rect x="10" y="1" width="1" height="1" fill="#4a68a8"/><rect x="12" y="1" width="1" height="1" fill="#4a68a8"/><rect x="14" y="1" width="1" height="1" fill="#4a68a8"/><rect x="1" y="3" width="14" height="9" fill="#000"/><g fill="#fff"><rect x="3" y="5" width="2" height="1"/><rect x="2" y="6" width="1" height="3"/><rect x="3" y="9" width="2" height="1"/><rect x="6" y="6" width="1" height="1"/><rect x="6" y="8" width="1" height="1"/><rect x="8" y="4" width="1" height="2"/><rect x="9" y="6" width="1" height="2"/><rect x="10" y="8" width="1" height="2"/><rect x="11" y="9" width="3" height="1"/></g></svg></div><div class="mi" style="left:40px;top:195px">Správce:  10.214.24.206, err:1</div><div class="mic" style="top:222px"><svg width="16" height="13" shape-rendering="crispEdges" style="display:block"><rect x="0" y="0" width="16" height="13" fill="#88a0b0"/><rect x="1" y="1" width="14" height="2" fill="#dde4ea"/><rect x="10" y="1" width="1" height="1" fill="#4a68a8"/><rect x="12" y="1" width="1" height="1" fill="#4a68a8"/><rect x="14" y="1" width="1" height="1" fill="#4a68a8"/><rect x="1" y="3" width="14" height="9" fill="#000"/><g fill="#fff"><rect x="3" y="5" width="2" height="1"/><rect x="2" y="6" width="1" height="3"/><rect x="3" y="9" width="2" height="1"/><rect x="6" y="6" width="1" height="1"/><rect x="6" y="8" width="1" height="1"/><rect x="8" y="4" width="1" height="2"/><rect x="9" y="6" width="1" height="2"/><rect x="10" y="8" width="1" height="2"/><rect x="11" y="9" width="3" height="1"/></g></svg></div><div class="mi" style="left:40px;top:222px">Správce:  10.214.24.207, err:0</div><div class="mic" style="top:249px"><svg width="16" height="13" shape-rendering="crispEdges" style="display:block"><rect x="0" y="0" width="16" height="13" fill="#88a0b0"/><rect x="1" y="1" width="14" height="2" fill="#dde4ea"/><rect x="10" y="1" width="1" height="1" fill="#4a68a8"/><rect x="12" y="1" width="1" height="1" fill="#4a68a8"/><rect x="14" y="1" width="1" height="1" fill="#4a68a8"/><rect x="1" y="3" width="14" height="9" fill="#000"/><g fill="#fff"><rect x="3" y="5" width="2" height="1"/><rect x="2" y="6" width="1" height="3"/><rect x="3" y="9" width="2" height="1"/><rect x="6" y="6" width="1" height="1"/><rect x="6" y="8" width="1" height="1"/><rect x="8" y="4" width="1" height="2"/><rect x="9" y="6" width="1" height="2"/><rect x="10" y="8" width="1" height="2"/><rect x="11" y="9" width="3" height="1"/></g></svg></div><div class="mi" style="left:40px;top:249px">Správce:  10.214.24.208, err:0</div><div class="mic" style="top:276px"><svg width="16" height="13" shape-rendering="crispEdges" style="display:block"><rect x="0" y="0" width="16" height="13" fill="#88a0b0"/><rect x="1" y="1" width="14" height="2" fill="#dde4ea"/><rect x="10" y="1" width="1" height="1" fill="#4a68a8"/><rect x="12" y="1" width="1" height="1" fill="#4a68a8"/><rect x="14" y="1" width="1" height="1" fill="#4a68a8"/><rect x="1" y="3" width="14" height="9" fill="#000"/><g fill="#fff"><rect x="3" y="5" width="2" height="1"/><rect x="2" y="6" width="1" height="3"/><rect x="3" y="9" width="2" height="1"/><rect x="6" y="6" width="1" height="1"/><rect x="6" y="8" width="1" height="1"/><rect x="8" y="4" width="1" height="2"/><rect x="9" y="6" width="1" height="2"/><rect x="10" y="8" width="1" height="2"/><rect x="11" y="9" width="3" height="1"/></g></svg></div><div class="mi" style="left:40px;top:276px">Správce:  10.214.24.209, err:0</div><div class="mic" style="top:303px"><svg width="16" height="13" shape-rendering="crispEdges" style="display:block"><rect x="0" y="0" width="16" height="13" fill="#88a0b0"/><rect x="1" y="1" width="14" height="2" fill="#dde4ea"/><rect x="10" y="1" width="1" height="1" fill="#4a68a8"/><rect x="12" y="1" width="1" height="1" fill="#4a68a8"/><rect x="14" y="1" width="1" height="1" fill="#4a68a8"/><rect x="1" y="3" width="14" height="9" fill="#000"/><g fill="#fff"><rect x="3" y="5" width="2" height="1"/><rect x="2" y="6" width="1" height="3"/><rect x="3" y="9" width="2" height="1"/><rect x="6" y="6" width="1" height="1"/><rect x="6" y="8" width="1" height="1"/><rect x="8" y="4" width="1" height="2"/><rect x="9" y="6" width="1" height="2"/><rect x="10" y="8" width="1" height="2"/><rect x="11" y="9" width="3" height="1"/></g></svg></div><div class="mi" style="left:40px;top:303px">Správce:  10.214.24.210, err:0</div><div class="mic" style="top:330px"><svg width="16" height="13" shape-rendering="crispEdges" style="display:block"><rect x="0" y="0" width="16" height="13" fill="#88a0b0"/><rect x="1" y="1" width="14" height="2" fill="#dde4ea"/><rect x="10" y="1" width="1" height="1" fill="#4a68a8"/><rect x="12" y="1" width="1" height="1" fill="#4a68a8"/><rect x="14" y="1" width="1" height="1" fill="#4a68a8"/><rect x="1" y="3" width="14" height="9" fill="#000"/><g fill="#fff"><rect x="3" y="5" width="2" height="1"/><rect x="2" y="6" width="1" height="3"/><rect x="3" y="9" width="2" height="1"/><rect x="6" y="6" width="1" height="1"/><rect x="6" y="8" width="1" height="1"/><rect x="8" y="4" width="1" height="2"/><rect x="9" y="6" width="1" height="2"/><rect x="10" y="8" width="1" height="2"/><rect x="11" y="9" width="3" height="1"/></g></svg></div><div class="mi" style="left:40px;top:330px">Správce:  10.214.24.241, err:1</div><div class="mic" style="top:357px"><svg width="16" height="13" shape-rendering="crispEdges" style="display:block"><rect x="0" y="0" width="16" height="13" fill="#88a0b0"/><rect x="1" y="1" width="14" height="2" fill="#dde4ea"/><rect x="10" y="1" width="1" height="1" fill="#4a68a8"/><rect x="12" y="1" width="1" height="1" fill="#4a68a8"/><rect x="14" y="1" width="1" height="1" fill="#4a68a8"/><rect x="1" y="3" width="14" height="9" fill="#000"/><g fill="#fff"><rect x="3" y="5" width="2" height="1"/><rect x="2" y="6" width="1" height="3"/><rect x="3" y="9" width="2" height="1"/><rect x="6" y="6" width="1" height="1"/><rect x="6" y="8" width="1" height="1"/><rect x="8" y="4" width="1" height="2"/><rect x="9" y="6" width="1" height="2"/><rect x="10" y="8" width="1" height="2"/><rect x="11" y="9" width="3" height="1"/></g></svg></div><div class="mi" style="left:40px;top:357px">Správce:  10.214.24.242, err:0</div><div class="mic" style="top:384px"><svg width="16" height="13" shape-rendering="crispEdges" style="display:block"><rect x="0" y="0" width="16" height="13" fill="#88a0b0"/><rect x="1" y="1" width="14" height="2" fill="#dde4ea"/><rect x="10" y="1" width="1" height="1" fill="#4a68a8"/><rect x="12" y="1" width="1" height="1" fill="#4a68a8"/><rect x="14" y="1" width="1" height="1" fill="#4a68a8"/><rect x="1" y="3" width="14" height="9" fill="#000"/><g fill="#fff"><rect x="3" y="5" width="2" height="1"/><rect x="2" y="6" width="1" height="3"/><rect x="3" y="9" width="2" height="1"/><rect x="6" y="6" width="1" height="1"/><rect x="6" y="8" width="1" height="1"/><rect x="8" y="4" width="1" height="2"/><rect x="9" y="6" width="1" height="2"/><rect x="10" y="8" width="1" height="2"/><rect x="11" y="9" width="3" height="1"/></g></svg></div><div class="mi" style="left:40px;top:384px">Správce:  10.214.24.244, err:0</div><div class="mic" style="top:411px"><svg width="16" height="13" shape-rendering="crispEdges" style="display:block"><rect x="0" y="0" width="16" height="13" fill="#88a0b0"/><rect x="1" y="1" width="14" height="2" fill="#dde4ea"/><rect x="10" y="1" width="1" height="1" fill="#4a68a8"/><rect x="12" y="1" width="1" height="1" fill="#4a68a8"/><rect x="14" y="1" width="1" height="1" fill="#4a68a8"/><rect x="1" y="3" width="14" height="9" fill="#000"/><g fill="#fff"><rect x="3" y="5" width="2" height="1"/><rect x="2" y="6" width="1" height="3"/><rect x="3" y="9" width="2" height="1"/><rect x="6" y="6" width="1" height="1"/><rect x="6" y="8" width="1" height="1"/><rect x="8" y="4" width="1" height="2"/><rect x="9" y="6" width="1" height="2"/><rect x="10" y="8" width="1" height="2"/><rect x="11" y="9" width="3" height="1"/></g></svg></div><div class="mi" style="left:40px;top:411px">Správce:  10.214.24.245, err:0</div><div class="mic" style="top:438px"><svg width="16" height="13" shape-rendering="crispEdges" style="display:block"><rect x="0" y="0" width="16" height="13" fill="#88a0b0"/><rect x="1" y="1" width="14" height="2" fill="#dde4ea"/><rect x="10" y="1" width="1" height="1" fill="#4a68a8"/><rect x="12" y="1" width="1" height="1" fill="#4a68a8"/><rect x="14" y="1" width="1" height="1" fill="#4a68a8"/><rect x="1" y="3" width="14" height="9" fill="#000"/><g fill="#fff"><rect x="3" y="5" width="2" height="1"/><rect x="2" y="6" width="1" height="3"/><rect x="3" y="9" width="2" height="1"/><rect x="6" y="6" width="1" height="1"/><rect x="6" y="8" width="1" height="1"/><rect x="8" y="4" width="1" height="2"/><rect x="9" y="6" width="1" height="2"/><rect x="10" y="8" width="1" height="2"/><rect x="11" y="9" width="3" height="1"/></g></svg></div><div class="mi" style="left:40px;top:438px">Správce:  10.214.24.246, err:0</div><div class="mic" style="top:465px"><svg width="16" height="13" shape-rendering="crispEdges" style="display:block"><rect x="0" y="0" width="16" height="13" fill="#88a0b0"/><rect x="1" y="1" width="14" height="2" fill="#dde4ea"/><rect x="10" y="1" width="1" height="1" fill="#4a68a8"/><rect x="12" y="1" width="1" height="1" fill="#4a68a8"/><rect x="14" y="1" width="1" height="1" fill="#4a68a8"/><rect x="1" y="3" width="14" height="9" fill="#000"/><g fill="#fff"><rect x="3" y="5" width="2" height="1"/><rect x="2" y="6" width="1" height="3"/><rect x="3" y="9" width="2" height="1"/><rect x="6" y="6" width="1" height="1"/><rect x="6" y="8" width="1" height="1"/><rect x="8" y="4" width="1" height="2"/><rect x="9" y="6" width="1" height="2"/><rect x="10" y="8" width="1" height="2"/><rect x="11" y="9" width="3" height="1"/></g></svg></div><div class="mi" style="left:40px;top:465px">Správce:  10.214.25.21, err:0</div><div class="mic" style="top:492px"><svg width="16" height="13" shape-rendering="crispEdges" style="display:block"><rect x="0" y="0" width="16" height="13" fill="#88a0b0"/><rect x="1" y="1" width="14" height="2" fill="#dde4ea"/><rect x="10" y="1" width="1" height="1" fill="#4a68a8"/><rect x="12" y="1" width="1" height="1" fill="#4a68a8"/><rect x="14" y="1" width="1" height="1" fill="#4a68a8"/><rect x="1" y="3" width="14" height="9" fill="#000"/><g fill="#fff"><rect x="3" y="5" width="2" height="1"/><rect x="2" y="6" width="1" height="3"/><rect x="3" y="9" width="2" height="1"/><rect x="6" y="6" width="1" height="1"/><rect x="6" y="8" width="1" height="1"/><rect x="8" y="4" width="1" height="2"/><rect x="9" y="6" width="1" height="2"/><rect x="10" y="8" width="1" height="2"/><rect x="11" y="9" width="3" height="1"/></g></svg></div><div class="mi" style="left:40px;top:492px">Správce:  10.214.25.23, err:1</div><div class="mic" style="top:519px"><svg width="16" height="13" shape-rendering="crispEdges" style="display:block"><rect x="0" y="0" width="16" height="13" fill="#88a0b0"/><rect x="1" y="1" width="14" height="2" fill="#dde4ea"/><rect x="10" y="1" width="1" height="1" fill="#4a68a8"/><rect x="12" y="1" width="1" height="1" fill="#4a68a8"/><rect x="14" y="1" width="1" height="1" fill="#4a68a8"/><rect x="1" y="3" width="14" height="9" fill="#000"/><g fill="#fff"><rect x="3" y="5" width="2" height="1"/><rect x="2" y="6" width="1" height="3"/><rect x="3" y="9" width="2" height="1"/><rect x="6" y="6" width="1" height="1"/><rect x="6" y="8" width="1" height="1"/><rect x="8" y="4" width="1" height="2"/><rect x="9" y="6" width="1" height="2"/><rect x="10" y="8" width="1" height="2"/><rect x="11" y="9" width="3" height="1"/></g></svg></div><div class="mi" style="left:40px;top:519px">Správce:  10.214.25.24, err:0</div><div class="mic" style="top:546px"><svg width="16" height="13" shape-rendering="crispEdges" style="display:block"><rect x="0" y="0" width="16" height="13" fill="#88a0b0"/><rect x="1" y="1" width="14" height="2" fill="#dde4ea"/><rect x="10" y="1" width="1" height="1" fill="#4a68a8"/><rect x="12" y="1" width="1" height="1" fill="#4a68a8"/><rect x="14" y="1" width="1" height="1" fill="#4a68a8"/><rect x="1" y="3" width="14" height="9" fill="#000"/><g fill="#fff"><rect x="3" y="5" width="2" height="1"/><rect x="2" y="6" width="1" height="3"/><rect x="3" y="9" width="2" height="1"/><rect x="6" y="6" width="1" height="1"/><rect x="6" y="8" width="1" height="1"/><rect x="8" y="4" width="1" height="2"/><rect x="9" y="6" width="1" height="2"/><rect x="10" y="8" width="1" height="2"/><rect x="11" y="9" width="3" height="1"/></g></svg></div><div class="mi" style="left:40px;top:546px">Správce:  10.214.25.25, err:0</div><div class="mic" style="top:573px"><svg width="16" height="13" shape-rendering="crispEdges" style="display:block"><rect x="0" y="0" width="16" height="13" fill="#88a0b0"/><rect x="1" y="1" width="14" height="2" fill="#dde4ea"/><rect x="10" y="1" width="1" height="1" fill="#4a68a8"/><rect x="12" y="1" width="1" height="1" fill="#4a68a8"/><rect x="14" y="1" width="1" height="1" fill="#4a68a8"/><rect x="1" y="3" width="14" height="9" fill="#000"/><g fill="#fff"><rect x="3" y="5" width="2" height="1"/><rect x="2" y="6" width="1" height="3"/><rect x="3" y="9" width="2" height="1"/><rect x="6" y="6" width="1" height="1"/><rect x="6" y="8" width="1" height="1"/><rect x="8" y="4" width="1" height="2"/><rect x="9" y="6" width="1" height="2"/><rect x="10" y="8" width="1" height="2"/><rect x="11" y="9" width="3" height="1"/></g></svg></div><div class="mi" style="left:40px;top:573px">Správce:  10.214.25.51, err:0</div><div class="mic" style="top:600px"><svg width="16" height="13" shape-rendering="crispEdges" style="display:block"><rect x="0" y="0" width="16" height="13" fill="#88a0b0"/><rect x="1" y="1" width="14" height="2" fill="#dde4ea"/><rect x="10" y="1" width="1" height="1" fill="#4a68a8"/><rect x="12" y="1" width="1" height="1" fill="#4a68a8"/><rect x="14" y="1" width="1" height="1" fill="#4a68a8"/><rect x="1" y="3" width="14" height="9" fill="#000"/><g fill="#fff"><rect x="3" y="5" width="2" height="1"/><rect x="2" y="6" width="1" height="3"/><rect x="3" y="9" width="2" height="1"/><rect x="6" y="6" width="1" height="1"/><rect x="6" y="8" width="1" height="1"/><rect x="8" y="4" width="1" height="2"/><rect x="9" y="6" width="1" height="2"/><rect x="10" y="8" width="1" height="2"/><rect x="11" y="9" width="3" height="1"/></g></svg></div><div class="mi" style="left:40px;top:600px">Správce:  10.214.25.52, err:0</div><div class="mic" style="top:627px"><svg width="16" height="13" shape-rendering="crispEdges" style="display:block"><rect x="0" y="0" width="16" height="13" fill="#88a0b0"/><rect x="1" y="1" width="14" height="2" fill="#dde4ea"/><rect x="10" y="1" width="1" height="1" fill="#4a68a8"/><rect x="12" y="1" width="1" height="1" fill="#4a68a8"/><rect x="14" y="1" width="1" height="1" fill="#4a68a8"/><rect x="1" y="3" width="14" height="9" fill="#000"/><g fill="#fff"><rect x="3" y="5" width="2" height="1"/><rect x="2" y="6" width="1" height="3"/><rect x="3" y="9" width="2" height="1"/><rect x="6" y="6" width="1" height="1"/><rect x="6" y="8" width="1" height="1"/><rect x="8" y="4" width="1" height="2"/><rect x="9" y="6" width="1" height="2"/><rect x="10" y="8" width="1" height="2"/><rect x="11" y="9" width="3" height="1"/></g></svg></div><div class="mi" style="left:40px;top:627px">Správce:  10.214.25.53, err:0</div><div class="mic" style="top:654px"><svg width="16" height="13" shape-rendering="crispEdges" style="display:block"><rect x="0" y="0" width="16" height="13" fill="#88a0b0"/><rect x="1" y="1" width="14" height="2" fill="#dde4ea"/><rect x="10" y="1" width="1" height="1" fill="#4a68a8"/><rect x="12" y="1" width="1" height="1" fill="#4a68a8"/><rect x="14" y="1" width="1" height="1" fill="#4a68a8"/><rect x="1" y="3" width="14" height="9" fill="#000"/><g fill="#fff"><rect x="3" y="5" width="2" height="1"/><rect x="2" y="6" width="1" height="3"/><rect x="3" y="9" width="2" height="1"/><rect x="6" y="6" width="1" height="1"/><rect x="6" y="8" width="1" height="1"/><rect x="8" y="4" width="1" height="2"/><rect x="9" y="6" width="1" height="2"/><rect x="10" y="8" width="1" height="2"/><rect x="11" y="9" width="3" height="1"/></g></svg></div><div class="mi" style="left:40px;top:654px">Správce:  10.214.25.54, err:0</div><div class="mic" style="top:681px"><svg width="16" height="13" shape-rendering="crispEdges" style="display:block"><rect x="0" y="0" width="16" height="13" fill="#88a0b0"/><rect x="1" y="1" width="14" height="2" fill="#dde4ea"/><rect x="10" y="1" width="1" height="1" fill="#4a68a8"/><rect x="12" y="1" width="1" height="1" fill="#4a68a8"/><rect x="14" y="1" width="1" height="1" fill="#4a68a8"/><rect x="1" y="3" width="14" height="9" fill="#000"/><g fill="#fff"><rect x="3" y="5" width="2" height="1"/><rect x="2" y="6" width="1" height="3"/><rect x="3" y="9" width="2" height="1"/><rect x="6" y="6" width="1" height="1"/><rect x="6" y="8" width="1" height="1"/><rect x="8" y="4" width="1" height="2"/><rect x="9" y="6" width="1" height="2"/><rect x="10" y="8" width="1" height="2"/><rect x="11" y="9" width="3" height="1"/></g></svg></div><div class="mi" style="left:40px;top:681px">Správce:  10.214.25.55, err:0</div><div class="mic" style="top:708px"><svg width="16" height="13" shape-rendering="crispEdges" style="display:block"><rect x="0" y="0" width="16" height="13" fill="#88a0b0"/><rect x="1" y="1" width="14" height="2" fill="#dde4ea"/><rect x="10" y="1" width="1" height="1" fill="#4a68a8"/><rect x="12" y="1" width="1" height="1" fill="#4a68a8"/><rect x="14" y="1" width="1" height="1" fill="#4a68a8"/><rect x="1" y="3" width="14" height="9" fill="#000"/><g fill="#fff"><rect x="3" y="5" width="2" height="1"/><rect x="2" y="6" width="1" height="3"/><rect x="3" y="9" width="2" height="1"/><rect x="6" y="6" width="1" height="1"/><rect x="6" y="8" width="1" height="1"/><rect x="8" y="4" width="1" height="2"/><rect x="9" y="6" width="1" height="2"/><rect x="10" y="8" width="1" height="2"/><rect x="11" y="9" width="3" height="1"/></g></svg></div><div class="mi" style="left:40px;top:708px">Správce:  10.214.25.56, err:0</div><div class="mic" style="top:735px"><svg width="16" height="13" shape-rendering="crispEdges" style="display:block"><rect x="0" y="0" width="16" height="13" fill="#88a0b0"/><rect x="1" y="1" width="14" height="2" fill="#dde4ea"/><rect x="10" y="1" width="1" height="1" fill="#4a68a8"/><rect x="12" y="1" width="1" height="1" fill="#4a68a8"/><rect x="14" y="1" width="1" height="1" fill="#4a68a8"/><rect x="1" y="3" width="14" height="9" fill="#000"/><g fill="#fff"><rect x="3" y="5" width="2" height="1"/><rect x="2" y="6" width="1" height="3"/><rect x="3" y="9" width="2" height="1"/><rect x="6" y="6" width="1" height="1"/><rect x="6" y="8" width="1" height="1"/><rect x="8" y="4" width="1" height="2"/><rect x="9" y="6" width="1" height="2"/><rect x="10" y="8" width="1" height="2"/><rect x="11" y="9" width="3" height="1"/></g></svg></div><div class="mi" style="left:40px;top:735px">Správce:  10.214.25.57, err:0</div><div class="mic" style="top:762px"><svg width="16" height="13" shape-rendering="crispEdges" style="display:block"><rect x="0" y="0" width="16" height="13" fill="#88a0b0"/><rect x="1" y="1" width="14" height="2" fill="#dde4ea"/><rect x="10" y="1" width="1" height="1" fill="#4a68a8"/><rect x="12" y="1" width="1" height="1" fill="#4a68a8"/><rect x="14" y="1" width="1" height="1" fill="#4a68a8"/><rect x="1" y="3" width="14" height="9" fill="#000"/><g fill="#fff"><rect x="3" y="5" width="2" height="1"/><rect x="2" y="6" width="1" height="3"/><rect x="3" y="9" width="2" height="1"/><rect x="6" y="6" width="1" height="1"/><rect x="6" y="8" width="1" height="1"/><rect x="8" y="4" width="1" height="2"/><rect x="9" y="6" width="1" height="2"/><rect x="10" y="8" width="1" height="2"/><rect x="11" y="9" width="3" height="1"/></g></svg></div><div class="mi" style="left:40px;top:762px">Správce:  10.214.25.58, err:0</div><div class="mic" style="top:789px"><svg width="16" height="13" shape-rendering="crispEdges" style="display:block"><rect x="0" y="0" width="16" height="13" fill="#88a0b0"/><rect x="1" y="1" width="14" height="2" fill="#dde4ea"/><rect x="10" y="1" width="1" height="1" fill="#4a68a8"/><rect x="12" y="1" width="1" height="1" fill="#4a68a8"/><rect x="14" y="1" width="1" height="1" fill="#4a68a8"/><rect x="1" y="3" width="14" height="9" fill="#000"/><g fill="#fff"><rect x="3" y="5" width="2" height="1"/><rect x="2" y="6" width="1" height="3"/><rect x="3" y="9" width="2" height="1"/><rect x="6" y="6" width="1" height="1"/><rect x="6" y="8" width="1" height="1"/><rect x="8" y="4" width="1" height="2"/><rect x="9" y="6" width="1" height="2"/><rect x="10" y="8" width="1" height="2"/><rect x="11" y="9" width="3" height="1"/></g></svg></div><div class="mi" style="left:40px;top:789px">Správce:  10.214.25.59, err:0</div><div class="mic" style="top:816px"><svg width="16" height="13" shape-rendering="crispEdges" style="display:block"><rect x="0" y="0" width="16" height="13" fill="#88a0b0"/><rect x="1" y="1" width="14" height="2" fill="#dde4ea"/><rect x="10" y="1" width="1" height="1" fill="#4a68a8"/><rect x="12" y="1" width="1" height="1" fill="#4a68a8"/><rect x="14" y="1" width="1" height="1" fill="#4a68a8"/><rect x="1" y="3" width="14" height="9" fill="#000"/><g fill="#fff"><rect x="3" y="5" width="2" height="1"/><rect x="2" y="6" width="1" height="3"/><rect x="3" y="9" width="2" height="1"/><rect x="6" y="6" width="1" height="1"/><rect x="6" y="8" width="1" height="1"/><rect x="8" y="4" width="1" height="2"/><rect x="9" y="6" width="1" height="2"/><rect x="10" y="8" width="1" height="2"/><rect x="11" y="9" width="3" height="1"/></g></svg></div><div class="mi" style="left:40px;top:816px">Správce:  10.214.25.60, err:0</div><div class="mic" style="top:843px"><svg width="16" height="13" shape-rendering="crispEdges" style="display:block"><rect x="0" y="0" width="16" height="13" fill="#88a0b0"/><rect x="1" y="1" width="14" height="2" fill="#dde4ea"/><rect x="10" y="1" width="1" height="1" fill="#4a68a8"/><rect x="12" y="1" width="1" height="1" fill="#4a68a8"/><rect x="14" y="1" width="1" height="1" fill="#4a68a8"/><rect x="1" y="3" width="14" height="9" fill="#000"/><g fill="#fff"><rect x="3" y="5" width="2" height="1"/><rect x="2" y="6" width="1" height="3"/><rect x="3" y="9" width="2" height="1"/><rect x="6" y="6" width="1" height="1"/><rect x="6" y="8" width="1" height="1"/><rect x="8" y="4" width="1" height="2"/><rect x="9" y="6" width="1" height="2"/><rect x="10" y="8" width="1" height="2"/><rect x="11" y="9" width="3" height="1"/></g></svg></div><div class="mi" style="left:40px;top:843px">Správce:  10.214.25.61, err:0</div><div class="mic" style="top:870px"><svg width="16" height="13" shape-rendering="crispEdges" style="display:block"><rect x="0" y="0" width="16" height="13" fill="#88a0b0"/><rect x="1" y="1" width="14" height="2" fill="#dde4ea"/><rect x="10" y="1" width="1" height="1" fill="#4a68a8"/><rect x="12" y="1" width="1" height="1" fill="#4a68a8"/><rect x="14" y="1" width="1" height="1" fill="#4a68a8"/><rect x="1" y="3" width="14" height="9" fill="#000"/><g fill="#fff"><rect x="3" y="5" width="2" height="1"/><rect x="2" y="6" width="1" height="3"/><rect x="3" y="9" width="2" height="1"/><rect x="6" y="6" width="1" height="1"/><rect x="6" y="8" width="1" height="1"/><rect x="8" y="4" width="1" height="2"/><rect x="9" y="6" width="1" height="2"/><rect x="10" y="8" width="1" height="2"/><rect x="11" y="9" width="3" height="1"/></g></svg></div><div class="mi" style="left:40px;top:870px">Správce:  10.214.25.62, err:0</div><div class="mic" style="top:897px"><svg width="16" height="13" shape-rendering="crispEdges" style="display:block"><rect x="0" y="0" width="16" height="13" fill="#88a0b0"/><rect x="1" y="1" width="14" height="2" fill="#dde4ea"/><rect x="10" y="1" width="1" height="1" fill="#4a68a8"/><rect x="12" y="1" width="1" height="1" fill="#4a68a8"/><rect x="14" y="1" width="1" height="1" fill="#4a68a8"/><rect x="1" y="3" width="14" height="9" fill="#000"/><g fill="#fff"><rect x="3" y="5" width="2" height="1"/><rect x="2" y="6" width="1" height="3"/><rect x="3" y="9" width="2" height="1"/><rect x="6" y="6" width="1" height="1"/><rect x="6" y="8" width="1" height="1"/><rect x="8" y="4" width="1" height="2"/><rect x="9" y="6" width="1" height="2"/><rect x="10" y="8" width="1" height="2"/><rect x="11" y="9" width="3" height="1"/></g></svg></div><div class="mi" style="left:40px;top:897px">Správce:  10.214.25.63, err:0</div><div class="mic" style="top:924px"><svg width="16" height="13" shape-rendering="crispEdges" style="display:block"><rect x="0" y="0" width="16" height="13" fill="#88a0b0"/><rect x="1" y="1" width="14" height="2" fill="#dde4ea"/><rect x="10" y="1" width="1" height="1" fill="#4a68a8"/><rect x="12" y="1" width="1" height="1" fill="#4a68a8"/><rect x="14" y="1" width="1" height="1" fill="#4a68a8"/><rect x="1" y="3" width="14" height="9" fill="#000"/><g fill="#fff"><rect x="3" y="5" width="2" height="1"/><rect x="2" y="6" width="1" height="3"/><rect x="3" y="9" width="2" height="1"/><rect x="6" y="6" width="1" height="1"/><rect x="6" y="8" width="1" height="1"/><rect x="8" y="4" width="1" height="2"/><rect x="9" y="6" width="1" height="2"/><rect x="10" y="8" width="1" height="2"/><rect x="11" y="9" width="3" height="1"/></g></svg></div><div class="mi" style="left:40px;top:924px">Správce:  10.214.25.64, err:0</div><svg class="a" style="left:126px;top:949px" width="5" height="3" shape-rendering="crispEdges"><rect x="0" y="0" width="5" height="1"/><rect x="1" y="1" width="3" height="1"/><rect x="2" y="2" width="1" height="1"/></svg></div><div class="a" style="left:0;top:972px;width:1280px;height:52px;background:#aa9a93"><div class="a" style="left:0;top:0;width:1280px;height:1px;background:#d0c4bc"></div><div class="a" style="left:0;top:1px;width:1280px;height:1px;background:#dcd2ca"></div></div><div class="tbtn" style="left:2px;top:976px;width:50px;height:22px"><svg class="a" style="left:2px;top:1px" width="16" height="16" viewBox="0 0 16 16"><path d="M1 3 Q4 1 7.5 3 L6.5 7.5 Q3.5 6 1 7.5Z" fill="#e85020"/><path d="M8.5 3.2 Q12 5 15 3 L14 7.5 Q11 9 7.7 7.7Z" fill="#70b030"/><path d="M0.8 8.5 Q3.5 7 6.3 8.6 L5.5 13 Q3 11.5 0 13Z" fill="#2080e0"/><path d="M7.5 8.8 Q10.5 10.5 13.8 8.6 L13 13 Q10 14.6 6.7 13.2Z" fill="#f8c020"/></svg><span class="a" style="left:19px;top:3px;font-weight:bold;font-size:11.5px;line-height:14px">Start</span></div><div class="a" style="left:59px;top:978px;width:3px;height:42px;border-left:1px solid #dcd2ca;border-right:1px solid #705850"></div><div class="a" style="left:188px;top:978px;width:3px;height:42px;border-left:1px solid #dcd2ca;border-right:1px solid #705850"></div><div class="a" style="left:1099px;top:977px;width:3px;height:42px;border-left:1px solid #dcd2ca;border-right:1px solid #705850"></div><div class="a" style="left:1129px;top:976px;width:3px;height:22px;border-left:1px solid #dcd2ca;border-right:1px solid #705850"></div><svg class="a" style="left:69px;top:979px" width="16" height="16" viewBox="0 0 16 16"><rect x="0.5" y="0.5" width="15" height="11" fill="#e8e8e0" stroke="#b0b0a8"/><rect x="2" y="2" width="12" height="8" fill="#1030c0"/><path d="M3 9 L8 4 M3 9 H6 M3 9 V6" stroke="#40e040" stroke-width="1.5"/><rect x="5" y="12" width="6" height="2" fill="#c0c0c0"/></svg><svg class="a" style="left:92px;top:979px" width="16" height="16" viewBox="0 0 16 16"><rect x="0.5" y="0.5" width="15" height="11" fill="#4890d8" stroke="#2060a0"/><circle cx="5" cy="6" r="3" fill="#fff"/><path d="M5 6 V3.5 A2.5 2.5 0 0 1 7.5 6Z" fill="#f0a020"/><rect x="9" y="4" width="4" height="1.2" fill="#fff"/><rect x="9" y="7" width="4" height="1.2" fill="#fff"/><ellipse cx="8" cy="14" rx="4" ry="2" fill="#d8d8d8"/></svg><svg class="a" style="left:116px;top:979px" width="16" height="16" viewBox="0 0 16 16"><rect x="2.5" y="0.5" width="10" height="9" fill="#2a70b0" stroke="#000"/><rect x="7" y="1" width="3" height="8" fill="#8cc8dc"/><path d="M2.5 10 L12.5 10 L7.5 15.5Z" fill="#fff" stroke="#000"/><path d="M5 11 H10 L7.5 13Z" fill="#3a80c0"/></svg><svg class="a" style="left:138px;top:979px" width="16" height="16" viewBox="0 0 16 16"><path d="M1 8 L7 5 L13 8 V15 L7 16 L1 14Z" fill="#20b0b0" stroke="#000" stroke-width="0.8"/><path d="M3 9 H5 M8 9 H10 M3 12 H5 M8 12 H10" stroke="#e0ffff" stroke-width="1.5"/><path d="M10 5 L13 1 M13 5 L15 2" stroke="#20c0c0" stroke-width="2"/></svg><svg class="a" style="left:162px;top:979px" width="16" height="16" viewBox="0 0 16 16"><circle cx="8" cy="9" r="6" fill="#3890e0"/><circle cx="8.5" cy="8.5" r="3" fill="#fff"/><rect x="5" y="8" width="7" height="1.5" fill="#3890e0"/><path d="M2 15 Q0 12 6 6 Q13 0 15 2 Q16 4 11 8" stroke="#e8b020" stroke-width="1.3" fill="none"/></svg><svg class="a" style="left:69px;top:1001px" width="16" height="16" viewBox="0 0 16 16"><rect x="0.5" y="0.5" width="14" height="15" fill="#f8f0c0" stroke="#d0b040"/><circle cx="7.5" cy="8" r="5" fill="#2070d0"/><path d="M4 6 Q6 4 8 6 Q7 9 5 9Z M9 9 Q11 8 12 10 Q10 12 9 11Z" fill="#30a030"/></svg><svg class="a" style="left:92px;top:1001px" width="16" height="16" viewBox="0 0 16 16"><rect x="0" y="0" width="16" height="16" fill="#203850"/><ellipse cx="8" cy="9" rx="6" ry="6" fill="#f0f0f0"/><ellipse cx="5.5" cy="8" rx="1.8" ry="2.2" fill="#111"/><ellipse cx="10.5" cy="8" rx="1.8" ry="2.2" fill="#111"/><circle cx="3" cy="3" r="2" fill="#111"/><circle cx="13" cy="3" r="2" fill="#111"/><ellipse cx="8" cy="12" rx="1.5" ry="1" fill="#111"/></svg><svg class="a" style="left:140px;top:1001px" width="16" height="16" viewBox="0 0 16 16"><path d="M0.5 0.5 H10 L14.5 5 V15.5 H0.5Z" fill="#e0e8f8" stroke="#8090c0"/><text x="7.5" y="13" font-family="Liberation Sans" font-weight="bold" font-size="13" text-anchor="middle" fill="#102080">?</text></svg><div class="a" style="left:113px;top:999px;width:20px;height:20px;border:2px solid #a09888"></div><div class="tbtn pr" style="left:200px;top:976px;width:103px;background:#dcd0c9;border-top:1px solid #140c0c;border-left:1px solid #140c0c;border-right:1px solid #dcd2ca;border-bottom:1px solid #dcd2ca;box-shadow:inset 1px 1px 0 #705850;"><div class="mic" style="left:3px;top:4px"><svg width="16" height="13" shape-rendering="crispEdges" style="display:block"><rect x="0" y="0" width="16" height="13" fill="#88a0b0"/><rect x="1" y="1" width="14" height="2" fill="#dde4ea"/><rect x="10" y="1" width="1" height="1" fill="#4a68a8"/><rect x="12" y="1" width="1" height="1" fill="#4a68a8"/><rect x="14" y="1" width="1" height="1" fill="#4a68a8"/><rect x="1" y="3" width="14" height="9" fill="#000"/><g fill="#fff"><rect x="3" y="5" width="2" height="1"/><rect x="2" y="6" width="1" height="3"/><rect x="3" y="9" width="2" height="1"/><rect x="6" y="6" width="1" height="1"/><rect x="6" y="8" width="1" height="1"/><rect x="8" y="4" width="1" height="2"/><rect x="9" y="6" width="1" height="2"/><rect x="10" y="8" width="1" height="2"/><rect x="11" y="9" width="3" height="1"/></g></svg></div><span class="a" style="left:24px;top:4px;line-height:13px;font-weight:bold;font-size:12px;">cmd.exe</span></div><div class="a" style="left:304px;top:976px;width:3px;height:22px;border-left:1px solid #dcd2ca;border-right:1px solid #705850"></div><div class="a" style="left:308px;top:976px;width:3px;height:22px;border-left:1px solid #dcd2ca;border-right:1px solid #705850"></div><svg class="a" style="left:322px;top:979px" width="16" height="16" viewBox="0 0 16 16"><rect x="0.5" y="0.5" width="15" height="15" fill="#fff" stroke="#000"/><path d="M2 3 L5 5 M5 3 L2 5" stroke="#c03030"/><ellipse cx="10" cy="4" rx="3" ry="1.5" fill="#2040c0"/><text x="8" y="12" font-family="Liberation Sans" font-weight="bold" font-size="7" text-anchor="middle" fill="#000">VNC</text><rect x="2" y="13" width="12" height="1" fill="#e02020"/></svg><svg class="a" style="left:356px;top:979px" width="16" height="16" viewBox="0 0 16 16"><circle cx="9" cy="7.5" r="5.5" fill="#3a78d0"/><path d="M8 4 Q11 3 12 6 Q11 9 8 8Z" fill="#70b0f0"/><path d="M2 1 L4 4 Q6 2 8 2 Q4 4 4.5 8 Q5.5 12.5 10 12.5 Q13.5 12 15 9 Q15 14 9 15.5 Q2 15.5 1 9 Q0.5 5 2 1Z" fill="#e8680c"/><path d="M3 10 Q5 14 9 14 Q12 14 14 11" stroke="#f8a020" stroke-width="1.2" fill="none"/><path d="M4 6 L7 6 L6 8Z" fill="#f09030"/></svg><svg class="a" style="left:391px;top:979px" width="16" height="16" viewBox="0 0 16 16"><rect x="2.5" y="0.5" width="10" height="9" fill="#2a70b0" stroke="#000"/><rect x="7" y="1" width="3" height="8" fill="#8cc8dc"/><path d="M2.5 10 L12.5 10 L7.5 15.5Z" fill="#fff" stroke="#000"/><path d="M5 11 H10 L7.5 13Z" fill="#3a80c0"/></svg><div class="tbtn" style="left:416px;top:976px;width:112px;"><svg class="a" style="left:4px;top:2px" width="16" height="16" viewBox="0 0 16 16"><circle cx="8" cy="8" r="7.5" fill="#2080e0"/><path d="M8 15 V8 M8 9 L3 9 M8 9 L13 9 M8 8 L4.5 3 M8 8 L11.5 3" stroke="#fff" stroke-width="2"/></svg><span class="a" style="left:24px;top:4px;line-height:13px;">Moje - Altap Sal...</span></div><div class="tbtn" style="left:530px;top:976px;width:112px;"><svg class="a" style="left:4px;top:2px" width="16" height="16" viewBox="0 0 16 16"><path d="M4 3 H14 V15 H5 Z" fill="#fff"/><path d="M14 3 V15 H5" stroke="#a89060" fill="none"/><path d="M2 3 H12.5 L12 14 H1 L1.5 10 L0.5 9 Z" fill="#8fd0e0"/><path d="M3 4 H12 V6 H3Z" fill="#d8f4fa" opacity="0.7"/><path d="M2 7.5 H11.5 M1.8 10 H11.5 M1.5 12.5 H11.5" stroke="#c8ecf4" stroke-width="0.9"/><path d="M3 3 L11 13" stroke="#6ab8d0" stroke-width="0.6" opacity="0.5"/><path d="M2.5 1 V3 M4.5 1 V3 M6.5 1 V3 M8.5 1 V3 M10.5 1 V3" stroke="#303030" stroke-width="0.9"/></svg><span class="a" style="left:24px;top:4px;line-height:13px;">wulog-24-201-2...</span></div><div class="tbtn" style="left:642px;top:976px;width:112px;"><svg class="a" style="left:4px;top:2px" width="16" height="16" viewBox="0 0 16 16"><path d="M4 3 H14 V15 H5 Z" fill="#fff"/><path d="M14 3 V15 H5" stroke="#a89060" fill="none"/><path d="M2 3 H12.5 L12 14 H1 L1.5 10 L0.5 9 Z" fill="#8fd0e0"/><path d="M3 4 H12 V6 H3Z" fill="#d8f4fa" opacity="0.7"/><path d="M2 7.5 H11.5 M1.8 10 H11.5 M1.5 12.5 H11.5" stroke="#c8ecf4" stroke-width="0.9"/><path d="M3 3 L11 13" stroke="#6ab8d0" stroke-width="0.6" opacity="0.5"/><path d="M2.5 1 V3 M4.5 1 V3 M6.5 1 V3 M8.5 1 V3 M10.5 1 V3" stroke="#303030" stroke-width="0.9"/></svg><span class="a" style="left:24px;top:4px;line-height:13px;">wulog-24-241-2...</span></div><div class="tbtn" style="left:754px;top:976px;width:111px;"><svg class="a" style="left:4px;top:2px" width="16" height="16" viewBox="0 0 16 16"><path d="M4 3 H14 V15 H5 Z" fill="#fff"/><path d="M14 3 V15 H5" stroke="#a89060" fill="none"/><path d="M2 3 H12.5 L12 14 H1 L1.5 10 L0.5 9 Z" fill="#8fd0e0"/><path d="M3 4 H12 V6 H3Z" fill="#d8f4fa" opacity="0.7"/><path d="M2 7.5 H11.5 M1.8 10 H11.5 M1.5 12.5 H11.5" stroke="#c8ecf4" stroke-width="0.9"/><path d="M3 3 L11 13" stroke="#6ab8d0" stroke-width="0.6" opacity="0.5"/><path d="M2.5 1 V3 M4.5 1 V3 M6.5 1 V3 M8.5 1 V3 M10.5 1 V3" stroke="#303030" stroke-width="0.9"/></svg><span class="a" style="left:24px;top:4px;line-height:13px;">wulog-25-21-25...</span></div><div class="tbtn" style="left:865px;top:976px;width:112px;"><svg class="a" style="left:4px;top:2px" width="16" height="16" viewBox="0 0 16 16"><path d="M4 3 H14 V15 H5 Z" fill="#fff"/><path d="M14 3 V15 H5" stroke="#a89060" fill="none"/><path d="M2 3 H12.5 L12 14 H1 L1.5 10 L0.5 9 Z" fill="#8fd0e0"/><path d="M3 4 H12 V6 H3Z" fill="#d8f4fa" opacity="0.7"/><path d="M2 7.5 H11.5 M1.8 10 H11.5 M1.5 12.5 H11.5" stroke="#c8ecf4" stroke-width="0.9"/><path d="M3 3 L11 13" stroke="#6ab8d0" stroke-width="0.6" opacity="0.5"/><path d="M2.5 1 V3 M4.5 1 V3 M6.5 1 V3 M8.5 1 V3 M10.5 1 V3" stroke="#303030" stroke-width="0.9"/></svg><span class="a" style="left:24px;top:4px;line-height:13px;">wulog-25-51-66...</span></div><div class="tbtn" style="left:977px;top:976px;width:112px;"><svg class="a" style="left:4px;top:2px" width="16" height="16" viewBox="0 0 16 16"><path d="M4 3 H14 V15 H5 Z" fill="#fff"/><path d="M14 3 V15 H5" stroke="#a89060" fill="none"/><path d="M2 3 H12.5 L12 14 H1 L1.5 10 L0.5 9 Z" fill="#8fd0e0"/><path d="M3 4 H12 V6 H3Z" fill="#d8f4fa" opacity="0.7"/><path d="M2 7.5 H11.5 M1.8 10 H11.5 M1.5 12.5 H11.5" stroke="#c8ecf4" stroke-width="0.9"/><path d="M3 3 L11 13" stroke="#6ab8d0" stroke-width="0.6" opacity="0.5"/><path d="M2.5 1 V3 M4.5 1 V3 M6.5 1 V3 M8.5 1 V3 M10.5 1 V3" stroke="#303030" stroke-width="0.9"/></svg><span class="a" style="left:24px;top:4px;line-height:13px;">wulog-25-101-2...</span></div><div class="tbtn" style="left:200px;top:1000px;width:148px;"><svg class="a" style="left:4px;top:2px" width="16" height="16" viewBox="0 0 16 16"><path d="M4 3 H14 V15 H5 Z" fill="#fff"/><path d="M14 3 V15 H5" stroke="#a89060" fill="none"/><path d="M2 3 H12.5 L12 14 H1 L1.5 10 L0.5 9 Z" fill="#8fd0e0"/><path d="M3 4 H12 V6 H3Z" fill="#d8f4fa" opacity="0.7"/><path d="M2 7.5 H11.5 M1.8 10 H11.5 M1.5 12.5 H11.5" stroke="#c8ecf4" stroke-width="0.9"/><path d="M3 3 L11 13" stroke="#6ab8d0" stroke-width="0.6" opacity="0.5"/><path d="M2.5 1 V3 M4.5 1 V3 M6.5 1 V3 M8.5 1 V3 M10.5 1 V3" stroke="#303030" stroke-width="0.9"/></svg><span class="a" style="left:24px;top:4px;line-height:13px;">wulog-26-21-39-Z.log - ...</span></div><div class="tbtn" style="left:348px;top:1000px;width:148px;"><svg class="a" style="left:4px;top:2px" width="16" height="16" viewBox="0 0 16 16"><path d="M4 3 H14 V15 H5 Z" fill="#fff"/><path d="M14 3 V15 H5" stroke="#a89060" fill="none"/><path d="M2 3 H12.5 L12 14 H1 L1.5 10 L0.5 9 Z" fill="#8fd0e0"/><path d="M3 4 H12 V6 H3Z" fill="#d8f4fa" opacity="0.7"/><path d="M2 7.5 H11.5 M1.8 10 H11.5 M1.5 12.5 H11.5" stroke="#c8ecf4" stroke-width="0.9"/><path d="M3 3 L11 13" stroke="#6ab8d0" stroke-width="0.6" opacity="0.5"/><path d="M2.5 1 V3 M4.5 1 V3 M6.5 1 V3 M8.5 1 V3 M10.5 1 V3" stroke="#303030" stroke-width="0.9"/></svg><span class="a" style="left:24px;top:4px;line-height:13px;">wulog-26-50-80-Z.log - ...</span></div><div class="tbtn" style="left:496px;top:1000px;width:148px;"><svg class="a" style="left:4px;top:2px" width="16" height="16" viewBox="0 0 16 16"><path d="M4 3 H14 V15 H5 Z" fill="#fff"/><path d="M14 3 V15 H5" stroke="#a89060" fill="none"/><path d="M2 3 H12.5 L12 14 H1 L1.5 10 L0.5 9 Z" fill="#8fd0e0"/><path d="M3 4 H12 V6 H3Z" fill="#d8f4fa" opacity="0.7"/><path d="M2 7.5 H11.5 M1.8 10 H11.5 M1.5 12.5 H11.5" stroke="#c8ecf4" stroke-width="0.9"/><path d="M3 3 L11 13" stroke="#6ab8d0" stroke-width="0.6" opacity="0.5"/><path d="M2.5 1 V3 M4.5 1 V3 M6.5 1 V3 M8.5 1 V3 M10.5 1 V3" stroke="#303030" stroke-width="0.9"/></svg><span class="a" style="left:24px;top:4px;line-height:13px;">wulog-26-103-150-Z.lo...</span></div><div class="tbtn" style="left:644px;top:1000px;width:148px;"><svg class="a" style="left:4px;top:2px" width="16" height="16" viewBox="0 0 16 16"><path d="M4 3 H14 V15 H5 Z" fill="#fff"/><path d="M14 3 V15 H5" stroke="#a89060" fill="none"/><path d="M2 3 H12.5 L12 14 H1 L1.5 10 L0.5 9 Z" fill="#8fd0e0"/><path d="M3 4 H12 V6 H3Z" fill="#d8f4fa" opacity="0.7"/><path d="M2 7.5 H11.5 M1.8 10 H11.5 M1.5 12.5 H11.5" stroke="#c8ecf4" stroke-width="0.9"/><path d="M3 3 L11 13" stroke="#6ab8d0" stroke-width="0.6" opacity="0.5"/><path d="M2.5 1 V3 M4.5 1 V3 M6.5 1 V3 M8.5 1 V3 M10.5 1 V3" stroke="#303030" stroke-width="0.9"/></svg><span class="a" style="left:24px;top:4px;line-height:13px;">wulog-26-171-188-Z.lo...</span></div><div class="tbtn" style="left:792px;top:1000px;width:148px;"><svg class="a" style="left:4px;top:2px" width="16" height="16" viewBox="0 0 16 16"><path d="M4 3 H14 V15 H5 Z" fill="#fff"/><path d="M14 3 V15 H5" stroke="#a89060" fill="none"/><path d="M2 3 H12.5 L12 14 H1 L1.5 10 L0.5 9 Z" fill="#8fd0e0"/><path d="M3 4 H12 V6 H3Z" fill="#d8f4fa" opacity="0.7"/><path d="M2 7.5 H11.5 M1.8 10 H11.5 M1.5 12.5 H11.5" stroke="#c8ecf4" stroke-width="0.9"/><path d="M3 3 L11 13" stroke="#6ab8d0" stroke-width="0.6" opacity="0.5"/><path d="M2.5 1 V3 M4.5 1 V3 M6.5 1 V3 M8.5 1 V3 M10.5 1 V3" stroke="#303030" stroke-width="0.9"/></svg><span class="a" style="left:24px;top:4px;line-height:13px;">wulog-27-3-4-Z.log - P...</span></div><div class="tbtn" style="left:942px;top:1000px;width:147px;"><svg class="a" style="left:3px;top:2px" width="16" height="16" viewBox="0 0 16 16"><rect x="0" y="0" width="16" height="16" fill="#f4f8f8"/><path d="M1 9 L4 7 L3 4 L6 5 L8 2 L10 5 L13 5 L12 8 L15 10 L11 11 L12 14 L9 13 L8 16 L6 13 L3 13 L4 10Z" fill="#ff0000"/><path d="M2 2 L4 4 M4 1 L5 4" stroke="#600" stroke-width="1"/></svg><span class="a" style="left:24px;top:4px;line-height:13px;">IrfanView</span></div><div class="a" style="left:1111px;top:980px;font-size:11px;line-height:14px;color:#000">CS</div><div class="a" style="left:1134px;top:976px;width:144px;height:46px;border-top:1px solid #705850;border-left:1px solid #705850;border-bottom:1px solid #dcd2ca;border-right:1px solid #dcd2ca"></div><svg class="a" style="left:1141px;top:982px" width="7" height="9"><path d="M0.5 4 L3.5 1 L6.5 4 M0.5 8 L3.5 5 L6.5 8" stroke="#000" stroke-width="1.3" fill="none"/></svg><svg class="a" style="left:1157px;top:980px" width="16" height="16" viewBox="0 0 16 16"><rect x="0" y="0" width="16" height="16" fill="#fff"/><path d="M1 2 H6 L8 10 L12 2 H15 L9 14 H7Z" fill="#000"/><rect x="10" y="11" width="6" height="3" fill="#30a030"/><path d="M0 7 Q2 6 4 7 M0 10 Q2 9 4 10" stroke="#c02020"/></svg><svg class="a" style="left:1181px;top:980px" width="16" height="16" viewBox="0 0 16 16"><path d="M1 3 H8 V14 H1Z" fill="#fff" stroke="#000"/><path d="M8 5 H13 M8 11 H13" stroke="#000" stroke-width="1.5"/><path d="M5 6 H10 V10 H5Z" fill="#fff" stroke="#000"/></svg><div class="a" style="left:1221px;top:983px;font-size:11px;line-height:13px;color:#000">7:52</div><svg class="a" style="left:1157px;top:1002px" width="16" height="16" viewBox="0 0 16 16"><rect x="4.5" y="4.5" width="11" height="8" fill="#d0d0d0" stroke="#606060"/><path d="M1 1 V15 M3 1 V5" stroke="#303030" stroke-width="1.3"/><rect x="7" y="13" width="6" height="2" fill="#808080"/></svg><svg class="a" style="left:1183px;top:1003px" width="13" height="13" viewBox="0 0 13 13"><path d="M1 4 H4 L8 1 V12 L4 9 H1Z" fill="#e8e8e8" stroke="#808080"/><path d="M10 4 Q12 6.5 10 9" stroke="#808080" fill="none"/></svg><div class="a" style="left:1204px;top:1003px;font-size:11px;line-height:13px;color:#000">15.11.2013</div><svg class="a" style="left:1260px;top:993px" width="16" height="13" viewBox="0 0 16 13"><defs><linearGradient id="sdg" x1="0" y1="0" x2="1" y2="1"><stop offset="0" stop-color="#1850b0"/><stop offset="1" stop-color="#58a8e8"/></linearGradient></defs><rect x="0.5" y="0.5" width="15" height="12" fill="url(#sdg)" stroke="#b8d0e8"/><rect x="1" y="10" width="14" height="2" fill="#303848"/><rect x="2" y="9" width="3" height="3" fill="#e05030"/></svg></body></html>
